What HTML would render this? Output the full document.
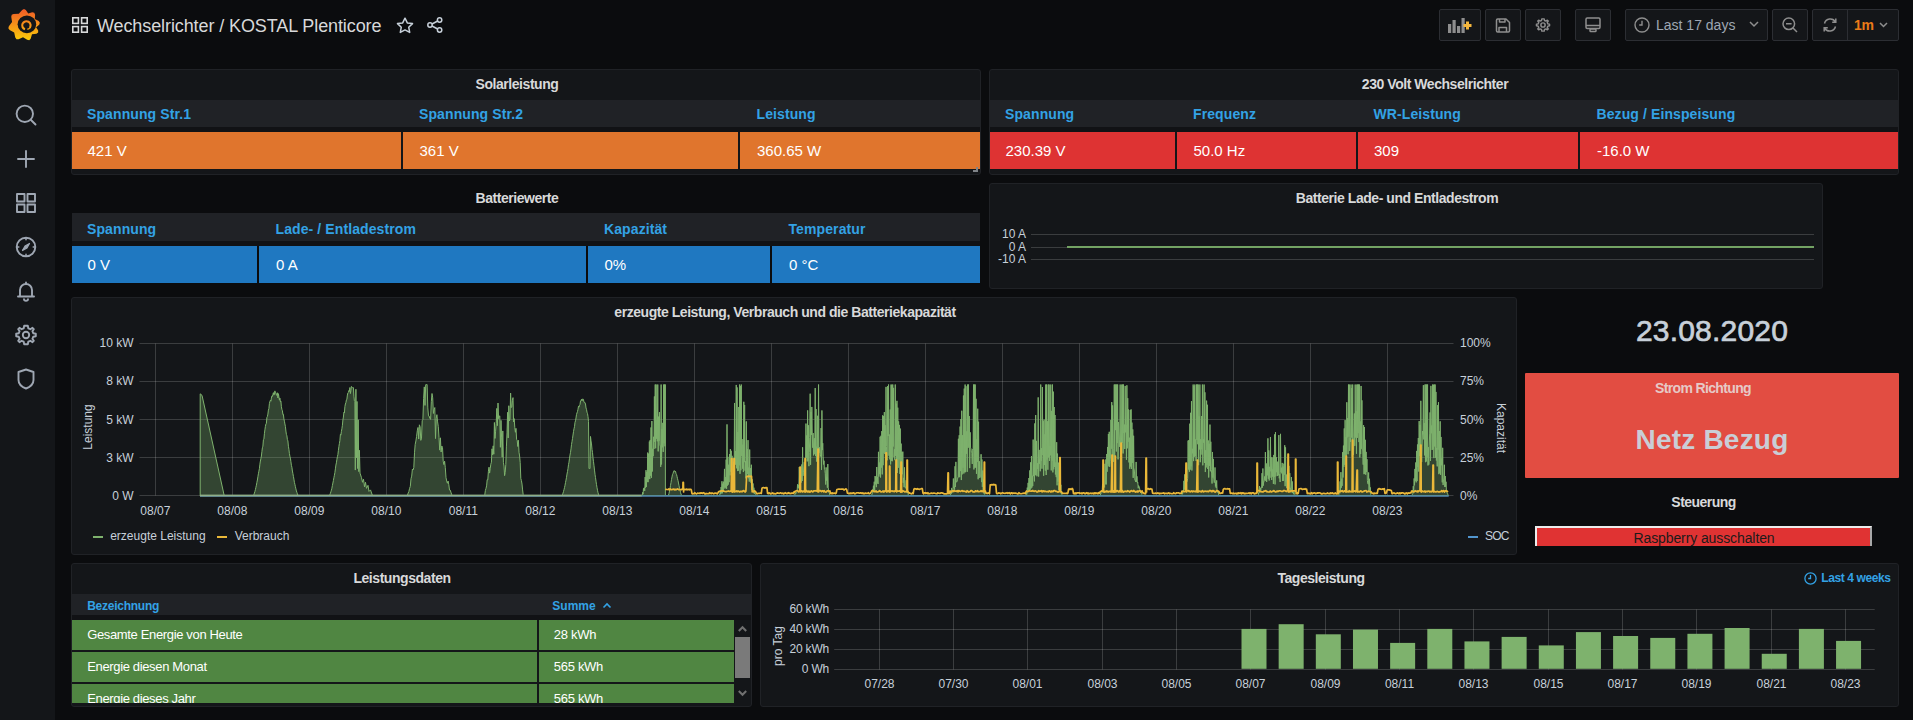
<!DOCTYPE html>
<html><head><meta charset="utf-8"><title>Grafana</title>
<style>
html,body{margin:0;padding:0;width:1913px;height:720px;overflow:hidden;background:#0b0c0e;}
body{position:relative;font-family:"Liberation Sans", sans-serif;}
.t{position:absolute;white-space:nowrap;}
.r{position:absolute;}
</style></head><body>
<div class="r" style="left:0.00px;top:0.00px;width:55.00px;height:720.00px;background:#141619;"></div>
<svg style="position:absolute;left:0px;top:0px" width="48" height="48" viewBox="0 0 48 48">
<defs><linearGradient id="lg" x1="0" y1="9" x2="0" y2="40" gradientUnits="userSpaceOnUse"><stop offset="0" stop-color="#f05a28"/><stop offset="1" stop-color="#fbca0a"/></linearGradient></defs>
<path fill="url(#lg)" d="M22.15 9.91 L24.00 9.00 L25.85 9.91 L28.21 13.44 L32.28 12.25 L34.28 12.74 L35.12 14.63 L34.76 19.04 L38.68 21.07 L39.84 22.77 L39.20 24.73 L36.11 27.14 L38.19 30.45 L38.13 32.51 L36.45 33.72 L31.99 34.35 L30.66 38.66 L29.21 40.13 L27.16 39.87 L23.03 37.26 L18.55 39.19 L16.49 39.13 L15.28 37.45 L14.18 32.40 L9.63 29.95 L8.35 28.33 L8.86 26.32 L12.07 22.02 L11.25 16.72 L11.74 14.72 L13.63 13.88 L18.80 13.85Z"/>
<ellipse cx="26.9" cy="24.3" rx="9.3" ry="8.9" fill="#141619"/>
<path fill="none" stroke="url(#lg)" stroke-width="2.1" d="M24.96 29.35 A4.2 4.2 0 1 1 29.84 27.81"/>
<path fill="none" stroke="url(#lg)" stroke-width="1.3" stroke-linecap="round" d="M29.84 27.81 A4.2 4.2 0 0 1 27.77 29.16"/>
</svg>
<svg style="position:absolute;left:14px;top:103px" width="24" height="24" viewBox="0 0 24 24" fill="none" stroke="#9fa7b3" stroke-width="1.9" stroke-linecap="round" stroke-linejoin="round"><circle cx="10.8" cy="10.8" r="8.2"/><path d="M17 17 L21.5 21.5"/></svg>
<svg style="position:absolute;left:14px;top:147px" width="24" height="24" viewBox="0 0 24 24" fill="none" stroke="#9fa7b3" stroke-width="1.9" stroke-linecap="round" stroke-linejoin="round"><path d="M12 4 V20 M4 12 H20"/></svg>
<svg style="position:absolute;left:14px;top:191px" width="24" height="24" viewBox="0 0 24 24" fill="none" stroke="#9fa7b3" stroke-width="1.9" stroke-linecap="round" stroke-linejoin="round"><rect x="3" y="3" width="7.5" height="7.5"/><rect x="13.5" y="3" width="7.5" height="7.5"/><rect x="3" y="13.5" width="7.5" height="7.5"/><rect x="13.5" y="13.5" width="7.5" height="7.5"/></svg>
<svg style="position:absolute;left:14px;top:235px" width="24" height="24" viewBox="0 0 24 24" fill="none" stroke="#9fa7b3" stroke-width="1.9" stroke-linecap="round" stroke-linejoin="round"><circle cx="12" cy="12" r="9.3"/><path d="M15.5 8.5 L13 13 L8.5 15.5 L11 11 Z" fill="#9fa7b3" stroke-width="1.2"/><path d="M12 3 V4.8 M12 19.2 V21 M3 12 H4.8 M19.2 12 H21" stroke-width="1.5"/></svg>
<svg style="position:absolute;left:14px;top:279px" width="24" height="24" viewBox="0 0 24 24" fill="none" stroke="#9fa7b3" stroke-width="1.9" stroke-linecap="round" stroke-linejoin="round"><path d="M6 17 V11 A6 6 0 0 1 18 11 V17"/><path d="M4 17.5 H20"/><path d="M10 20.3 A2 1.5 0 0 0 14 20.3"/><path d="M12 3.5 V5"/></svg>
<svg style="position:absolute;left:14px;top:323px" width="24" height="24" viewBox="0 0 24 24" fill="none" stroke="#9fa7b3" stroke-width="1.9" stroke-linecap="round" stroke-linejoin="round"><path d="M12 2.8 L13.8 2.8 L14.3 5.3 L16.4 6.2 L18.5 4.8 L19.8 6.1 L18.4 8.2 L19.3 10.3 L21.8 10.8 L21.8 13.2 L19.3 13.7 L18.4 15.8 L19.8 17.9 L18.5 19.2 L16.4 17.8 L14.3 18.7 L13.8 21.2 L10.2 21.2 L9.7 18.7 L7.6 17.8 L5.5 19.2 L4.2 17.9 L5.6 15.8 L4.7 13.7 L2.2 13.2 L2.2 10.8 L4.7 10.3 L5.6 8.2 L4.2 6.1 L5.5 4.8 L7.6 6.2 L9.7 5.3 L10.2 2.8 Z"/><circle cx="12" cy="12" r="3.2"/></svg>
<svg style="position:absolute;left:14px;top:367px" width="24" height="24" viewBox="0 0 24 24" fill="none" stroke="#9fa7b3" stroke-width="1.9" stroke-linecap="round" stroke-linejoin="round"><path d="M12 2.5 L19.5 5 V13 C19.5 17 16 20 12 21.5 C8 20 4.5 17 4.5 13 V5 Z"/></svg>
<svg style="position:absolute;left:72px;top:17px" width="16" height="16" viewBox="0 0 16 16" fill="none" stroke="#d8d9da" stroke-width="1.6"><rect x="0.8" y="0.8" width="5.6" height="5.6"/><rect x="9.6" y="0.8" width="5.6" height="5.6"/><rect x="0.8" y="9.6" width="5.6" height="5.6"/><rect x="9.6" y="9.6" width="5.6" height="5.6"/></svg>
<div class="t" style="left:97.00px;top:16.76px;width:1200px;font-size:18px;line-height:18px;color:#d8d9da;font-weight:400;text-align:left;letter-spacing:-0.1px;">Wechselrichter / KOSTAL Plenticore</div>
<svg style="position:absolute;left:396px;top:17px" width="18" height="17" viewBox="0 0 18 17" fill="none" stroke="#c7d0d9" stroke-width="1.5" stroke-linejoin="round"><path d="M9 1.2 L11.3 5.9 L16.5 6.6 L12.7 10.2 L13.7 15.4 L9 12.9 L4.3 15.4 L5.3 10.2 L1.5 6.6 L6.7 5.9 Z"/></svg>
<svg style="position:absolute;left:427px;top:17px" width="16" height="16" viewBox="0 0 16 16" fill="none" stroke="#c7d0d9" stroke-width="1.5"><circle cx="12.6" cy="3" r="2.2"/><circle cx="3" cy="8" r="2.2"/><circle cx="12.6" cy="13" r="2.2"/><path d="M5 7 L10.7 4 M5 9 L10.7 12"/></svg>
<div class="r" style="left:1439px;top:9px;width:42px;height:32px;background:#141619;border:1px solid #2c2e33;box-sizing:border-box;border-radius:2px;"></div>
<svg style="position:absolute;left:1448px;top:17px" width="24" height="16" viewBox="0 0 24 16"><rect x="0" y="7" width="3.2" height="9" fill="#8e8e8e"/><rect x="4.5" y="3" width="3.2" height="13" fill="#8e8e8e"/><rect x="9" y="9" width="3.2" height="7" fill="#8e8e8e"/><rect x="13.5" y="1" width="3.2" height="15" fill="#8e8e8e"/><path d="M19.5 4.5 V12.5 M15.5 8.5 H23.5" stroke="#f5b73d" stroke-width="3"/></svg>
<div class="r" style="left:1485px;top:9px;width:36px;height:32px;background:#141619;border:1px solid #2c2e33;box-sizing:border-box;border-radius:2px;"></div>
<svg style="position:absolute;left:1495px;top:18px" width="16" height="15" viewBox="0 0 16 15" fill="none" stroke="#8e8e8e" stroke-width="1.5" stroke-linejoin="round"><path d="M1.5 2.2 Q1.5 1 2.7 1 H11 L14.5 4.5 V12.8 Q14.5 14 13.3 14 H2.7 Q1.5 14 1.5 12.8 Z"/><path d="M4.5 1 V4 H10 V1"/><path d="M4 14 V9.5 H11.5 V14"/></svg>
<div class="r" style="left:1525px;top:9px;width:36px;height:32px;background:#141619;border:1px solid #2c2e33;box-sizing:border-box;border-radius:2px;"></div>
<svg style="position:absolute;left:1535px;top:17px" width="16" height="16" viewBox="0 0 24 24" fill="none" stroke="#8e8e8e" stroke-width="2.2" stroke-linejoin="round"><path d="M12 2.8 L13.8 2.8 L14.3 5.3 L16.4 6.2 L18.5 4.8 L19.8 6.1 L18.4 8.2 L19.3 10.3 L21.8 10.8 L21.8 13.2 L19.3 13.7 L18.4 15.8 L19.8 17.9 L18.5 19.2 L16.4 17.8 L14.3 18.7 L13.8 21.2 L10.2 21.2 L9.7 18.7 L7.6 17.8 L5.5 19.2 L4.2 17.9 L5.6 15.8 L4.7 13.7 L2.2 13.2 L2.2 10.8 L4.7 10.3 L5.6 8.2 L4.2 6.1 L5.5 4.8 L7.6 6.2 L9.7 5.3 L10.2 2.8 Z"/><circle cx="12" cy="12" r="3.2"/></svg>
<div class="r" style="left:1575px;top:9px;width:36px;height:32px;background:#141619;border:1px solid #2c2e33;box-sizing:border-box;border-radius:2px;"></div>
<svg style="position:absolute;left:1585px;top:17px" width="16" height="16" viewBox="0 0 16 16" fill="none" stroke="#8e8e8e" stroke-width="1.5"><rect x="1" y="1" width="14" height="10.5" rx="1.2"/><path d="M1 8.5 H15"/><rect x="5" y="12" width="6" height="2.5" rx="0.8"/></svg>
<div class="r" style="left:1625px;top:9px;width:143px;height:32px;background:#141619;border:1px solid #2c2e33;box-sizing:border-box;border-radius:2px;"></div>
<svg style="position:absolute;left:1634px;top:17px" width="16" height="16" viewBox="0 0 16 16" fill="none" stroke="#8e8e8e" stroke-width="1.4"><circle cx="8" cy="8" r="7"/><path d="M8 3.8 V8 H5.2"/></svg><svg style="position:absolute;left:1749px;top:21px" width="10" height="7" viewBox="0 0 10 7" fill="none" stroke="#8e8e8e" stroke-width="1.5"><path d="M1 1 L5 5 L9 1"/></svg>
<div class="t" style="left:1656.00px;top:17.65px;width:1200px;font-size:14px;line-height:14px;color:#9fa7b3;font-weight:400;text-align:left;letter-spacing:0px;">Last 17 days</div>
<div class="r" style="left:1772px;top:9px;width:36px;height:32px;background:#141619;border:1px solid #2c2e33;box-sizing:border-box;border-radius:2px;"></div>
<svg style="position:absolute;left:1782px;top:17px" width="16" height="16" viewBox="0 0 16 16" fill="none" stroke="#8e8e8e" stroke-width="1.5"><circle cx="6.8" cy="6.8" r="5.8"/><path d="M11 11 L15 15 M4 6.8 H9.6"/></svg>
<div class="r" style="left:1812px;top:9px;width:87px;height:32px;background:#141619;border:1px solid #2c2e33;box-sizing:border-box;border-radius:2px;"></div>
<div class="r" style="left:1847px;top:10px;width:1px;height:30px;background:#2c2e33"></div><svg style="position:absolute;left:1822px;top:17px" width="16" height="16" viewBox="0 0 16 16" fill="none" stroke="#8e8e8e" stroke-width="1.5"><path d="M2.5 6.5 A6 6 0 0 1 13.5 5 M13.8 1.5 V5.2 H10.2"/><path d="M13.5 9.5 A6 6 0 0 1 2.5 11 M2.2 14.5 V10.8 H5.8"/></svg><svg style="position:absolute;left:1879px;top:22px" width="9" height="6" viewBox="0 0 9 6" fill="none" stroke="#8e8e8e" stroke-width="1.5"><path d="M1 1 L4.5 4.5 L8 1"/></svg>
<div class="t" style="left:1854.00px;top:18.15px;width:1200px;font-size:14px;line-height:14px;color:#eb7b18;font-weight:700;text-align:left;letter-spacing:-0.3px;">1m</div>
<div class="r" style="left:71.00px;top:69.00px;width:910.00px;height:106.00px;background:#141619;border:1px solid #202226;box-sizing:border-box;border-radius:3px;"></div>
<div class="t" style="left:-83.00px;top:76.85px;width:1200px;font-size:14px;line-height:14px;color:#d8d9da;font-weight:700;text-align:center;letter-spacing:-0.45px;">Solarleistung</div>
<div class="r" style="left:72.00px;top:100.00px;width:908.00px;height:27.00px;background:#202226;"></div>
<div class="r" style="left:72.00px;top:127.00px;width:908.00px;height:5.00px;background:#111215;"></div>
<div class="r" style="left:72.00px;top:132.00px;width:329.00px;height:37.00px;background:#e0752d;"></div>
<div class="t" style="left:87.00px;top:107.45px;width:1200px;font-size:14px;line-height:14px;color:#33a2e5;font-weight:700;text-align:left;letter-spacing:0.1px;">Spannung Str.1</div>
<div class="t" style="left:87.50px;top:143.10px;width:1200px;font-size:15px;line-height:15px;color:#ffffff;font-weight:400;text-align:left;letter-spacing:0px;">421 V</div>
<div class="r" style="left:403.00px;top:132.00px;width:335.00px;height:37.00px;background:#e0752d;"></div>
<div class="t" style="left:419.00px;top:107.45px;width:1200px;font-size:14px;line-height:14px;color:#33a2e5;font-weight:700;text-align:left;letter-spacing:0.1px;">Spannung Str.2</div>
<div class="t" style="left:419.50px;top:143.10px;width:1200px;font-size:15px;line-height:15px;color:#ffffff;font-weight:400;text-align:left;letter-spacing:0px;">361 V</div>
<div class="r" style="left:740.00px;top:132.00px;width:240.00px;height:37.00px;background:#e0752d;"></div>
<div class="t" style="left:756.50px;top:107.45px;width:1200px;font-size:14px;line-height:14px;color:#33a2e5;font-weight:700;text-align:left;letter-spacing:0.1px;">Leistung</div>
<div class="t" style="left:757.00px;top:143.10px;width:1200px;font-size:15px;line-height:15px;color:#ffffff;font-weight:400;text-align:left;letter-spacing:0px;">360.65 W</div>
<div class="r" style="left:989.00px;top:69.00px;width:910.00px;height:106.00px;background:#141619;border:1px solid #202226;box-sizing:border-box;border-radius:3px;"></div>
<div class="t" style="left:835.00px;top:76.85px;width:1200px;font-size:14px;line-height:14px;color:#d8d9da;font-weight:700;text-align:center;letter-spacing:-0.45px;">230 Volt Wechselrichter</div>
<div class="r" style="left:990.00px;top:100.00px;width:908.00px;height:27.00px;background:#202226;"></div>
<div class="r" style="left:990.00px;top:127.00px;width:908.00px;height:5.00px;background:#111215;"></div>
<div class="r" style="left:990.00px;top:132.00px;width:185.00px;height:37.00px;background:#de3333;"></div>
<div class="t" style="left:1005.00px;top:107.45px;width:1200px;font-size:14px;line-height:14px;color:#33a2e5;font-weight:700;text-align:left;letter-spacing:0.1px;">Spannung</div>
<div class="t" style="left:1005.50px;top:143.10px;width:1200px;font-size:15px;line-height:15px;color:#ffffff;font-weight:400;text-align:left;letter-spacing:0px;">230.39 V</div>
<div class="r" style="left:1177.00px;top:132.00px;width:179.00px;height:37.00px;background:#de3333;"></div>
<div class="t" style="left:1193.00px;top:107.45px;width:1200px;font-size:14px;line-height:14px;color:#33a2e5;font-weight:700;text-align:left;letter-spacing:0.1px;">Frequenz</div>
<div class="t" style="left:1193.50px;top:143.10px;width:1200px;font-size:15px;line-height:15px;color:#ffffff;font-weight:400;text-align:left;letter-spacing:0px;">50.0 Hz</div>
<div class="r" style="left:1358.00px;top:132.00px;width:220.00px;height:37.00px;background:#de3333;"></div>
<div class="t" style="left:1373.50px;top:107.45px;width:1200px;font-size:14px;line-height:14px;color:#33a2e5;font-weight:700;text-align:left;letter-spacing:0.1px;">WR-Leistung</div>
<div class="t" style="left:1374.00px;top:143.10px;width:1200px;font-size:15px;line-height:15px;color:#ffffff;font-weight:400;text-align:left;letter-spacing:0px;">309</div>
<div class="r" style="left:1580.00px;top:132.00px;width:318.00px;height:37.00px;background:#de3333;"></div>
<div class="t" style="left:1596.50px;top:107.45px;width:1200px;font-size:14px;line-height:14px;color:#33a2e5;font-weight:700;text-align:left;letter-spacing:0.1px;">Bezug / Einspeisung</div>
<div class="t" style="left:1597.00px;top:143.10px;width:1200px;font-size:15px;line-height:15px;color:#ffffff;font-weight:400;text-align:left;letter-spacing:0px;">-16.0 W</div>
<div class="t" style="left:-83.00px;top:190.85px;width:1200px;font-size:14px;line-height:14px;color:#d8d9da;font-weight:700;text-align:center;letter-spacing:-0.45px;">Batteriewerte</div>
<div class="r" style="left:72.00px;top:213.00px;width:908.00px;height:28.00px;background:#202226;"></div>
<div class="r" style="left:72.00px;top:241.00px;width:908.00px;height:5.00px;background:#111215;"></div>
<div class="r" style="left:72.00px;top:246.00px;width:185.00px;height:37.00px;background:#1f78c1;"></div>
<div class="t" style="left:87.00px;top:221.65px;width:1200px;font-size:14px;line-height:14px;color:#33a2e5;font-weight:700;text-align:left;letter-spacing:0.1px;">Spannung</div>
<div class="t" style="left:87.50px;top:257.10px;width:1200px;font-size:15px;line-height:15px;color:#ffffff;font-weight:400;text-align:left;letter-spacing:0px;">0 V</div>
<div class="r" style="left:259.00px;top:246.00px;width:327.00px;height:37.00px;background:#1f78c1;"></div>
<div class="t" style="left:275.50px;top:221.65px;width:1200px;font-size:14px;line-height:14px;color:#33a2e5;font-weight:700;text-align:left;letter-spacing:0.1px;">Lade- / Entladestrom</div>
<div class="t" style="left:276.00px;top:257.10px;width:1200px;font-size:15px;line-height:15px;color:#ffffff;font-weight:400;text-align:left;letter-spacing:0px;">0 A</div>
<div class="r" style="left:588.00px;top:246.00px;width:182.00px;height:37.00px;background:#1f78c1;"></div>
<div class="t" style="left:604.00px;top:221.65px;width:1200px;font-size:14px;line-height:14px;color:#33a2e5;font-weight:700;text-align:left;letter-spacing:0.1px;">Kapazität</div>
<div class="t" style="left:604.50px;top:257.10px;width:1200px;font-size:15px;line-height:15px;color:#ffffff;font-weight:400;text-align:left;letter-spacing:0px;">0%</div>
<div class="r" style="left:772.00px;top:246.00px;width:208.00px;height:37.00px;background:#1f78c1;"></div>
<div class="t" style="left:788.50px;top:221.65px;width:1200px;font-size:14px;line-height:14px;color:#33a2e5;font-weight:700;text-align:left;letter-spacing:0.1px;">Temperatur</div>
<div class="t" style="left:789.00px;top:257.10px;width:1200px;font-size:15px;line-height:15px;color:#ffffff;font-weight:400;text-align:left;letter-spacing:0px;">0 °C</div>
<div class="r" style="left:976.00px;top:166.50px;width:2.00px;height:5.50px;background:#7f8388;"></div>
<div class="r" style="left:973.00px;top:170.00px;width:5.00px;height:2.00px;background:#7f8388;"></div>
<div class="r" style="left:989.00px;top:183.00px;width:834.00px;height:106.00px;background:#141619;border:1px solid #202226;box-sizing:border-box;border-radius:3px;"></div>
<div class="t" style="left:797.00px;top:190.65px;width:1200px;font-size:14px;line-height:14px;color:#d8d9da;font-weight:700;text-align:center;letter-spacing:-0.45px;">Batterie Lade- und Entladestrom</div>
<div class="r" style="left:1031.00px;top:234.00px;width:783.00px;height:1.00px;background:rgba(255,255,255,0.17);"></div>
<div class="t" style="left:-174.00px;top:228.34px;width:1200px;font-size:12px;line-height:12px;color:#c7d0d9;font-weight:400;text-align:right;letter-spacing:0px;">10 A</div>
<div class="r" style="left:1031.00px;top:247.00px;width:783.00px;height:1.00px;background:rgba(255,255,255,0.17);"></div>
<div class="t" style="left:-174.00px;top:240.84px;width:1200px;font-size:12px;line-height:12px;color:#c7d0d9;font-weight:400;text-align:right;letter-spacing:0px;">0 A</div>
<div class="r" style="left:1031.00px;top:259.00px;width:783.00px;height:1.00px;background:rgba(255,255,255,0.17);"></div>
<div class="t" style="left:-174.00px;top:253.34px;width:1200px;font-size:12px;line-height:12px;color:#c7d0d9;font-weight:400;text-align:right;letter-spacing:0px;">-10 A</div>
<div class="r" style="left:1067.00px;top:246.00px;width:747.00px;height:2.00px;background:#73a263;"></div>
<div class="r" style="left:71.00px;top:297.00px;width:1446.00px;height:258.00px;background:#141619;border:1px solid #202226;box-sizing:border-box;border-radius:3px;"></div>
<div class="t" style="left:185.00px;top:305.15px;width:1200px;font-size:14px;line-height:14px;color:#d8d9da;font-weight:700;text-align:center;letter-spacing:-0.45px;">erzeugte Leistung, Verbrauch und die Batteriekapazität</div>
<svg style="position:absolute;left:0;top:0" width="1913" height="720" viewBox="0 0 1913 720"><line x1="139.5" y1="495.5" x2="1453.5" y2="495.5" stroke="rgba(255,255,255,0.17)" stroke-width="1"/><line x1="139.5" y1="457.5" x2="1453.5" y2="457.5" stroke="rgba(255,255,255,0.17)" stroke-width="1"/><line x1="139.5" y1="419.5" x2="1453.5" y2="419.5" stroke="rgba(255,255,255,0.17)" stroke-width="1"/><line x1="139.5" y1="381.5" x2="1453.5" y2="381.5" stroke="rgba(255,255,255,0.17)" stroke-width="1"/><line x1="139.5" y1="343.5" x2="1453.5" y2="343.5" stroke="rgba(255,255,255,0.17)" stroke-width="1"/><line x1="155.5" y1="343.5" x2="155.5" y2="495.5" stroke="rgba(255,255,255,0.17)" stroke-width="1"/><line x1="232.5" y1="343.5" x2="232.5" y2="495.5" stroke="rgba(255,255,255,0.17)" stroke-width="1"/><line x1="309.5" y1="343.5" x2="309.5" y2="495.5" stroke="rgba(255,255,255,0.17)" stroke-width="1"/><line x1="386.5" y1="343.5" x2="386.5" y2="495.5" stroke="rgba(255,255,255,0.17)" stroke-width="1"/><line x1="463.5" y1="343.5" x2="463.5" y2="495.5" stroke="rgba(255,255,255,0.17)" stroke-width="1"/><line x1="540.5" y1="343.5" x2="540.5" y2="495.5" stroke="rgba(255,255,255,0.17)" stroke-width="1"/><line x1="617.5" y1="343.5" x2="617.5" y2="495.5" stroke="rgba(255,255,255,0.17)" stroke-width="1"/><line x1="694.5" y1="343.5" x2="694.5" y2="495.5" stroke="rgba(255,255,255,0.17)" stroke-width="1"/><line x1="771.5" y1="343.5" x2="771.5" y2="495.5" stroke="rgba(255,255,255,0.17)" stroke-width="1"/><line x1="848.5" y1="343.5" x2="848.5" y2="495.5" stroke="rgba(255,255,255,0.17)" stroke-width="1"/><line x1="925.5" y1="343.5" x2="925.5" y2="495.5" stroke="rgba(255,255,255,0.17)" stroke-width="1"/><line x1="1002.5" y1="343.5" x2="1002.5" y2="495.5" stroke="rgba(255,255,255,0.17)" stroke-width="1"/><line x1="1079.5" y1="343.5" x2="1079.5" y2="495.5" stroke="rgba(255,255,255,0.17)" stroke-width="1"/><line x1="1156.5" y1="343.5" x2="1156.5" y2="495.5" stroke="rgba(255,255,255,0.17)" stroke-width="1"/><line x1="1233.5" y1="343.5" x2="1233.5" y2="495.5" stroke="rgba(255,255,255,0.17)" stroke-width="1"/><line x1="1310.5" y1="343.5" x2="1310.5" y2="495.5" stroke="rgba(255,255,255,0.17)" stroke-width="1"/><line x1="1387.5" y1="343.5" x2="1387.5" y2="495.5" stroke="rgba(255,255,255,0.17)" stroke-width="1"/><path d="M200.20 496.00 L200.20 496.00 L200.20 393.82 L202.00 395.35 L224.30 496.00 L224.30 496.00Z M252.90 496.00 L252.90 496.00 L253.40 495.50 L253.90 494.54 L254.40 493.11 L254.90 491.56 L255.40 489.61 L255.90 487.32 L256.40 485.24 L256.90 482.36 L257.40 480.01 L257.90 476.77 L258.40 473.78 L258.90 471.17 L259.40 468.70 L259.90 464.19 L260.40 461.03 L260.90 458.57 L261.40 456.03 L261.90 451.69 L262.40 447.75 L262.90 446.15 L263.40 439.70 L263.90 439.15 L264.40 433.73 L264.90 429.83 L265.40 426.44 L265.90 424.07 L266.40 423.32 L266.90 417.41 L267.40 416.50 L267.90 414.10 L268.40 410.13 L268.90 408.62 L269.40 403.64 L269.90 401.43 L270.40 400.26 L270.90 401.23 L271.40 398.10 L271.90 395.96 L272.40 396.38 L272.90 394.49 L273.40 392.65 L273.90 395.12 L274.40 394.05 L274.90 390.88 L275.40 392.93 L275.90 392.75 L276.40 395.30 L276.90 394.86 L277.40 392.75 L277.90 397.96 L278.40 393.64 L278.90 396.72 L279.40 400.17 L279.90 398.11 L280.40 401.83 L280.90 401.15 L281.40 406.74 L281.90 409.42 L282.40 410.68 L282.90 414.66 L283.40 414.36 L283.90 418.91 L284.40 421.19 L284.90 423.98 L285.40 426.40 L285.90 431.02 L286.40 434.47 L286.90 435.79 L287.40 439.67 L287.90 440.88 L288.40 446.23 L288.90 449.30 L289.40 453.48 L289.90 456.21 L290.40 458.14 L290.90 461.60 L291.40 465.32 L291.90 467.26 L292.40 471.04 L292.90 473.57 L293.40 476.39 L293.90 479.10 L294.40 482.36 L294.90 484.30 L295.40 486.69 L295.90 488.88 L296.40 490.94 L296.90 492.40 L297.40 493.91 L297.90 495.04 L298.40 495.80 L298.40 496.00Z M328.90 496.00 L328.90 496.00 L329.40 495.55 L329.90 494.57 L330.40 493.30 L330.90 491.72 L331.40 490.15 L331.90 488.24 L332.40 485.46 L332.90 483.03 L333.40 480.48 L333.90 477.74 L334.40 475.27 L334.90 472.53 L335.40 468.84 L335.90 465.07 L336.40 462.82 L336.90 459.41 L337.40 456.69 L337.90 454.67 L338.40 450.50 L338.90 446.51 L339.40 443.58 L339.90 440.52 L340.40 434.36 L340.90 435.11 L341.40 431.36 L341.90 428.77 L342.40 425.32 L342.90 419.98 L343.40 417.06 L343.90 412.33 L344.40 412.99 L344.90 406.55 L345.40 404.01 L345.90 402.58 L346.40 399.98 L346.90 399.18 L347.40 395.06 L347.90 392.84 L348.40 392.38 L348.90 390.53 L349.40 391.36 L349.90 387.53 L350.40 393.59 L350.90 390.76 L351.40 386.39 L351.90 386.92 L352.40 387.58 L352.90 388.09 L353.40 387.64 L353.90 396.18 L354.40 400.92 L354.90 401.61 L355.30 470.07 L355.90 389.25 L356.40 457.88 L357.00 401.45 L357.60 468.55 L358.20 419.75 L358.80 471.60 L359.40 450.25 L360.00 473.12 L361.50 477.70 L362.50 482.27 L363.50 479.23 L364.50 486.85 L365.50 482.27 L366.50 488.38 L368.00 485.32 L369.00 491.43 L370.50 489.90 L372.60 496.00 L372.60 496.00Z M406.80 496.00 L406.80 496.00 L407.50 494.95 L408.20 493.03 L408.90 491.43 L409.60 488.33 L410.30 486.44 L411.00 478.70 L411.70 476.13 L412.40 469.13 L413.10 469.90 L413.80 467.57 L414.50 452.80 L415.20 444.34 L415.90 440.95 L416.60 436.38 L417.30 430.73 L418.00 427.48 L418.70 439.05 L419.40 424.80 L420.10 426.71 L420.80 440.36 L421.50 438.06 L422.20 420.79 L422.90 419.43 L423.60 398.68 L424.30 386.89 L425.00 405.41 L425.70 384.70 L426.40 384.52 L427.10 384.52 L427.80 407.90 L428.50 415.84 L429.20 416.12 L429.90 418.67 L430.60 419.31 L431.30 401.65 L432.00 393.50 L432.70 397.88 L433.40 413.47 L434.10 409.54 L434.80 407.55 L435.50 438.55 L436.20 418.36 L436.90 414.67 L437.60 421.92 L438.30 426.59 L439.00 437.62 L439.70 450.15 L440.40 437.80 L441.10 452.04 L441.80 446.03 L442.50 447.56 L443.20 461.19 L443.90 464.62 L444.60 461.17 L445.30 467.72 L446.00 477.69 L446.70 480.98 L447.40 483.24 L448.10 481.04 L448.80 484.69 L449.50 490.00 L450.20 490.11 L450.90 492.15 L451.60 494.27 L452.30 495.57 L452.30 496.00Z M483.60 496.00 L483.60 496.00 L484.20 495.43 L484.80 494.58 L485.40 490.40 L486.00 488.36 L486.60 485.86 L487.20 479.64 L487.80 479.92 L488.40 471.31 L489.00 467.18 L489.60 473.10 L490.20 468.79 L490.80 464.24 L491.40 462.21 L492.00 448.81 L492.60 454.82 L493.20 445.83 L493.80 454.22 L494.40 422.48 L495.00 438.45 L495.60 431.21 L496.20 423.34 L496.80 408.40 L497.40 425.69 L498.00 403.02 L498.60 418.71 L499.20 416.21 L499.80 415.87 L500.40 447.30 L501.00 420.37 L501.60 437.96 L502.20 457.21 L502.80 430.92 L503.40 462.35 L504.00 466.04 L504.60 475.66 L505.20 472.39 L505.80 464.45 L506.40 446.89 L507.00 432.88 L507.60 412.30 L508.20 437.96 L508.80 405.74 L509.40 420.95 L510.00 419.05 L510.60 393.05 L511.20 407.64 L511.80 406.89 L512.40 400.38 L513.00 397.62 L513.60 421.96 L514.20 418.62 L514.80 427.66 L515.40 432.28 L516.00 428.35 L516.60 439.43 L517.20 440.29 L517.80 446.51 L518.40 440.26 L519.00 452.28 L519.60 455.94 L520.20 462.56 L520.80 478.46 L521.40 480.51 L522.00 484.04 L522.60 489.92 L523.20 494.73 L523.20 496.00Z M561.50 496.00 L561.50 496.00 L562.00 495.51 L562.50 494.50 L563.00 493.15 L563.50 491.47 L564.00 489.66 L564.50 487.58 L565.00 485.32 L565.50 482.54 L566.00 480.12 L566.50 477.31 L567.00 474.05 L567.50 471.54 L568.00 468.53 L568.50 464.67 L569.00 462.15 L569.50 458.26 L570.00 455.04 L570.50 452.37 L571.00 448.86 L571.50 444.53 L572.00 441.65 L572.50 438.54 L573.00 435.03 L573.50 431.62 L574.00 428.80 L574.50 426.70 L575.00 422.33 L575.50 420.80 L576.00 417.95 L576.50 414.46 L577.00 412.92 L577.50 411.52 L578.00 409.25 L578.50 406.24 L579.00 407.13 L579.50 405.16 L580.00 404.45 L580.50 400.93 L581.00 400.54 L581.50 399.23 L582.00 400.95 L582.50 399.23 L583.00 398.81 L583.50 399.98 L584.00 402.06 L584.50 402.78 L585.00 402.52 L585.50 403.89 L586.00 407.99 L586.50 409.32 L587.00 412.22 L587.50 413.53 L588.00 416.60 L588.50 421.42 L589.00 468.55 L589.50 468.55 L590.00 468.55 L590.50 436.46 L591.00 440.88 L591.50 443.95 L592.00 449.40 L592.50 452.63 L593.00 457.92 L593.50 461.71 L594.00 465.81 L594.50 470.08 L595.00 474.27 L595.50 477.63 L596.00 481.15 L596.50 484.64 L597.00 487.58 L597.50 490.26 L598.00 492.58 L598.50 494.42 L599.00 495.67 L599.00 496.00Z M668.00 496.00 L668.00 496.00 L668.50 495.12 L669.00 493.43 L669.50 491.03 L670.00 488.45 L670.50 485.40 L671.00 482.57 L671.50 479.40 L672.00 476.99 L672.50 474.38 L673.00 473.49 L673.50 471.90 L674.00 470.57 L674.50 470.82 L675.00 471.83 L675.50 471.29 L676.00 473.45 L676.50 474.39 L677.00 476.27 L677.50 478.71 L678.00 480.51 L678.50 483.01 L679.00 485.57 L679.50 488.11 L680.00 490.10 L680.50 492.31 L681.00 494.03 L681.50 495.34 L682.00 496.00 L682.00 496.00Z M641.80 496.00 L641.80 496.00 L642.22 495.60 L642.64 492.34 L643.06 494.23 L643.48 488.38 L643.90 490.90 L644.32 487.63 L644.74 490.79 L645.16 477.05 L645.58 487.75 L646.00 470.17 L646.42 486.98 L646.84 471.94 L647.26 482.07 L647.68 452.58 L648.10 482.15 L648.52 453.65 L648.94 478.81 L649.36 441.53 L649.78 479.13 L650.20 439.98 L650.62 475.74 L651.04 427.43 L651.46 477.80 L651.88 421.02 L652.30 471.51 L652.72 448.78 L653.14 456.22 L653.56 436.80 L653.98 449.03 L654.40 396.46 L654.82 441.84 L655.24 384.52 L655.66 448.29 L656.08 384.52 L656.50 438.67 L656.92 420.17 L657.34 441.29 L657.76 384.52 L658.18 451.38 L658.60 416.62 L659.02 440.82 L659.44 412.19 L659.86 445.53 L660.28 445.45 L660.70 466.89 L661.12 384.52 L661.54 464.47 L661.96 428.96 L662.38 447.33 L662.80 422.84 L663.22 451.87 L663.64 384.52 L664.06 443.38 L664.48 384.52 L664.90 446.30 L665.32 384.52 L665.40 496.00 L665.40 496.00Z M718.60 496.00 L718.60 496.00 L719.02 495.78 L719.44 494.71 L719.86 495.30 L720.28 490.20 L720.70 494.04 L721.12 487.04 L721.54 493.25 L721.96 481.25 L722.38 493.31 L722.80 483.62 L723.22 492.07 L723.64 481.67 L724.06 487.28 L724.48 468.89 L724.90 488.59 L725.32 477.17 L725.74 487.56 L726.16 459.61 L726.58 488.79 L727.00 424.39 L727.42 485.68 L727.84 456.79 L728.26 484.64 L728.68 464.71 L729.10 482.18 L729.52 454.00 L729.94 475.37 L730.36 449.12 L730.78 471.70 L731.20 450.75 L731.62 482.68 L732.04 455.75 L732.46 470.43 L732.88 458.40 L733.30 480.51 L733.72 461.65 L734.14 471.63 L734.56 402.98 L734.98 464.75 L735.40 451.06 L735.82 464.47 L736.24 384.94 L736.66 468.32 L737.08 387.40 L737.50 471.07 L737.92 432.05 L738.34 470.78 L738.76 406.99 L739.18 465.40 L739.60 384.52 L740.02 473.81 L740.44 385.98 L740.86 470.34 L741.28 384.52 L741.70 455.80 L742.12 439.14 L742.54 468.64 L742.96 444.60 L743.38 472.06 L743.80 401.77 L744.22 462.18 L744.64 404.94 L745.06 470.64 L745.48 461.23 L745.90 478.40 L746.32 421.42 L746.74 477.55 L747.16 449.13 L747.58 473.96 L748.00 440.14 L748.42 478.23 L748.84 467.46 L749.26 481.61 L749.68 449.56 L750.10 480.65 L750.52 468.21 L750.94 482.68 L751.36 464.73 L751.78 489.95 L752.20 479.27 L752.62 487.50 L753.04 483.45 L753.46 490.31 L753.88 487.69 L754.30 493.90 L754.72 492.13 L755.14 493.77 L755.56 494.27 L755.98 495.72 L755.98 496.00Z M794.20 496.00 L794.20 496.00 L794.62 495.46 L795.04 493.41 L795.46 494.10 L795.88 492.71 L796.30 493.18 L796.72 492.31 L797.14 491.39 L797.56 484.35 L797.98 487.83 L798.40 484.89 L798.82 488.36 L799.24 467.00 L799.66 482.54 L800.08 485.20 L800.50 482.03 L800.92 476.89 L801.34 482.57 L801.76 464.51 L802.18 480.99 L802.60 447.28 L803.02 475.95 L803.44 472.81 L803.86 466.91 L804.28 462.02 L804.70 475.27 L805.12 464.10 L805.54 459.97 L805.96 423.58 L806.38 458.00 L806.80 435.44 L807.22 461.45 L807.64 410.39 L808.06 460.82 L808.48 425.31 L808.90 466.18 L809.32 452.43 L809.74 437.67 L810.16 393.68 L810.58 464.79 L811.00 411.93 L811.42 434.87 L811.84 406.94 L812.26 433.19 L812.68 447.68 L813.10 433.04 L813.52 455.38 L813.94 442.57 L814.36 438.23 L814.78 454.25 L815.20 388.07 L815.62 456.08 L816.04 409.05 L816.46 461.56 L816.88 446.58 L817.30 453.38 L817.72 415.75 L818.14 450.72 L818.56 384.52 L818.98 452.81 L819.40 447.30 L819.82 453.11 L820.24 456.58 L820.66 454.84 L821.08 428.07 L821.50 469.85 L821.92 410.43 L822.34 450.07 L822.76 443.23 L823.18 456.30 L823.60 464.47 L824.02 460.72 L824.44 469.44 L824.86 470.29 L825.28 473.71 L825.70 484.55 L826.12 467.39 L826.54 480.55 L826.96 477.29 L827.38 487.79 L827.80 464.02 L828.22 487.26 L828.64 490.80 L829.06 493.02 L829.48 493.14 L829.90 495.82 L829.90 496.00Z M870.90 496.00 L870.90 496.00 L871.32 495.46 L871.74 494.39 L872.16 494.51 L872.58 489.60 L873.00 492.09 L873.42 485.72 L873.84 490.16 L874.26 481.69 L874.68 491.57 L875.10 476.02 L875.52 484.27 L875.94 476.77 L876.36 487.17 L876.78 467.00 L877.20 483.25 L877.62 476.88 L878.04 483.99 L878.46 451.82 L878.88 476.64 L879.30 462.48 L879.72 474.20 L880.14 436.80 L880.56 477.53 L880.98 435.72 L881.40 467.58 L881.82 431.08 L882.24 474.38 L882.66 415.34 L883.08 465.22 L883.50 415.96 L883.92 452.88 L884.34 412.12 L884.76 454.02 L885.18 425.17 L885.60 469.97 L886.02 386.88 L886.44 446.63 L886.86 458.35 L887.28 460.26 L887.70 386.10 L888.12 436.02 L888.54 384.52 L888.96 455.71 L889.38 434.45 L889.80 459.39 L890.22 409.54 L890.64 464.44 L891.06 384.52 L891.48 460.77 L891.90 384.79 L892.32 461.22 L892.74 384.52 L893.16 446.55 L893.58 387.86 L894.00 457.18 L894.42 449.28 L894.84 460.18 L895.26 384.52 L895.68 455.95 L896.10 403.65 L896.52 462.93 L896.94 400.84 L897.36 472.94 L897.78 407.67 L898.20 467.80 L898.62 421.39 L899.04 459.39 L899.46 424.90 L899.88 473.88 L900.30 428.57 L900.72 465.91 L901.14 443.62 L901.56 473.36 L901.98 452.10 L902.40 474.24 L902.82 451.62 L903.24 482.74 L903.66 477.86 L904.08 487.17 L904.50 467.37 L904.92 485.70 L905.34 488.03 L905.76 488.38 L906.18 480.24 L906.60 492.49 L907.02 486.08 L907.44 492.54 L907.86 491.56 L908.28 495.09 L908.70 496.00 L908.70 496.00Z M950.00 496.00 L950.00 496.00 L950.42 495.46 L950.84 493.12 L951.26 493.93 L951.68 487.90 L952.10 492.75 L952.52 491.10 L952.94 490.50 L953.36 478.49 L953.78 488.19 L954.20 486.50 L954.62 489.67 L955.04 466.26 L955.46 486.99 L955.88 461.87 L956.30 482.27 L956.72 481.43 L957.14 481.59 L957.56 479.18 L957.98 476.22 L958.40 438.78 L958.82 477.40 L959.24 435.21 L959.66 477.08 L960.08 426.56 L960.50 471.08 L960.92 419.06 L961.34 480.06 L961.76 410.73 L962.18 474.38 L962.60 435.19 L963.02 467.71 L963.44 395.56 L963.86 473.57 L964.28 388.57 L964.70 472.25 L965.12 384.52 L965.54 472.18 L965.96 386.19 L966.38 453.80 L966.80 431.32 L967.22 471.82 L967.64 384.52 L968.06 448.03 L968.48 384.52 L968.90 446.83 L969.32 416.10 L969.74 468.12 L970.16 432.31 L970.58 447.88 L971.00 448.70 L971.42 452.34 L971.84 453.70 L972.26 463.95 L972.68 449.02 L973.10 449.47 L973.52 384.52 L973.94 469.45 L974.36 384.52 L974.78 467.73 L975.20 384.52 L975.62 467.55 L976.04 398.78 L976.46 473.79 L976.88 439.13 L977.30 461.87 L977.72 408.71 L978.14 479.31 L978.56 421.72 L978.98 477.86 L979.40 461.25 L979.82 477.77 L980.24 476.66 L980.66 476.55 L981.08 454.25 L981.50 482.10 L981.92 459.52 L982.34 486.88 L982.76 470.53 L983.18 490.29 L983.60 479.67 L984.02 493.70 L984.44 492.73 L984.86 494.71 L985.28 495.60 L985.28 496.00Z M1025.60 496.00 L1025.60 496.00 L1026.02 495.75 L1026.44 492.72 L1026.86 494.31 L1027.28 487.60 L1027.70 492.20 L1028.12 482.84 L1028.54 491.02 L1028.96 478.03 L1029.38 490.53 L1029.80 470.40 L1030.22 489.72 L1030.64 462.33 L1031.06 488.41 L1031.48 456.08 L1031.90 487.52 L1032.32 475.71 L1032.74 485.94 L1033.16 439.58 L1033.58 476.14 L1034.00 465.03 L1034.42 481.40 L1034.84 423.40 L1035.26 475.29 L1035.68 415.04 L1036.10 474.93 L1036.52 440.92 L1036.94 476.29 L1037.36 463.14 L1037.78 468.93 L1038.20 397.39 L1038.62 476.60 L1039.04 458.67 L1039.46 463.74 L1039.88 449.85 L1040.30 471.26 L1040.72 384.52 L1041.14 460.91 L1041.56 448.22 L1041.98 468.69 L1042.40 386.99 L1042.82 455.11 L1043.24 421.09 L1043.66 475.79 L1044.08 419.60 L1044.50 465.04 L1044.92 434.28 L1045.34 470.64 L1045.76 384.52 L1046.18 475.03 L1046.60 384.52 L1047.02 459.66 L1047.44 421.28 L1047.86 469.71 L1048.28 384.52 L1048.70 457.48 L1049.12 384.52 L1049.54 460.90 L1049.96 446.10 L1050.38 455.33 L1050.80 384.52 L1051.22 470.41 L1051.64 410.89 L1052.06 460.72 L1052.48 384.52 L1052.90 472.38 L1053.32 391.61 L1053.74 469.41 L1054.16 407.01 L1054.58 466.91 L1055.00 415.00 L1055.42 474.46 L1055.84 462.49 L1056.26 477.18 L1056.68 442.21 L1057.10 485.33 L1057.52 453.61 L1057.94 481.65 L1058.36 462.61 L1058.78 489.92 L1059.20 482.95 L1059.62 491.44 L1060.04 478.72 L1060.46 491.51 L1060.88 484.79 L1061.30 493.83 L1061.72 492.57 L1062.14 495.93 L1062.14 496.00Z M1100.00 496.00 L1100.00 496.00 L1100.42 495.22 L1100.84 492.50 L1101.26 492.87 L1101.68 493.12 L1102.10 492.45 L1102.52 484.31 L1102.94 487.33 L1103.36 485.08 L1103.78 484.28 L1104.20 485.12 L1104.62 487.43 L1105.04 463.82 L1105.46 484.28 L1105.88 459.43 L1106.30 484.42 L1106.72 454.01 L1107.14 471.74 L1107.56 446.97 L1107.98 463.72 L1108.40 433.98 L1108.82 466.36 L1109.24 431.80 L1109.66 466.88 L1110.08 461.68 L1110.50 456.98 L1110.92 420.02 L1111.34 448.71 L1111.76 402.10 L1112.18 465.10 L1112.60 405.41 L1113.02 443.07 L1113.44 461.80 L1113.86 448.35 L1114.28 384.52 L1114.70 456.37 L1115.12 384.52 L1115.54 430.10 L1115.96 384.52 L1116.38 451.49 L1116.80 384.52 L1117.22 443.11 L1117.64 384.52 L1118.06 459.40 L1118.48 422.01 L1118.90 431.85 L1119.32 439.14 L1119.74 446.90 L1120.16 384.52 L1120.58 459.19 L1121.00 455.72 L1121.42 454.51 L1121.84 384.52 L1122.26 443.00 L1122.68 384.52 L1123.10 453.44 L1123.52 384.52 L1123.94 433.12 L1124.36 424.56 L1124.78 448.96 L1125.20 385.92 L1125.62 432.36 L1126.04 424.95 L1126.46 459.76 L1126.88 385.28 L1127.30 448.34 L1127.72 398.17 L1128.14 441.85 L1128.56 409.47 L1128.98 462.40 L1129.40 437.70 L1129.82 468.75 L1130.24 409.99 L1130.66 466.53 L1131.08 409.38 L1131.50 468.89 L1131.92 422.58 L1132.34 462.89 L1132.76 429.40 L1133.18 477.87 L1133.60 435.73 L1134.02 467.98 L1134.44 471.06 L1134.86 480.16 L1135.28 479.97 L1135.70 482.01 L1136.12 461.95 L1136.54 481.80 L1136.96 476.34 L1137.38 483.11 L1137.80 482.27 L1138.22 488.28 L1138.64 485.57 L1139.06 486.40 L1139.48 487.97 L1139.90 489.77 L1140.32 490.52 L1140.74 492.98 L1141.16 491.67 L1141.58 493.85 L1142.00 494.63 L1142.42 495.88 L1142.42 496.00Z M1181.40 496.00 L1181.40 496.00 L1181.82 495.50 L1182.24 492.41 L1182.66 493.84 L1183.08 490.20 L1183.50 491.25 L1183.92 480.84 L1184.34 489.61 L1184.76 474.34 L1185.18 485.79 L1185.60 484.26 L1186.02 483.05 L1186.44 478.10 L1186.86 481.78 L1187.28 480.82 L1187.70 478.32 L1188.12 440.61 L1188.54 469.47 L1188.96 440.01 L1189.38 471.72 L1189.80 423.67 L1190.22 469.68 L1190.64 412.79 L1191.06 466.31 L1191.48 401.18 L1191.90 470.49 L1192.32 448.79 L1192.74 453.38 L1193.16 384.52 L1193.58 461.11 L1194.00 386.02 L1194.42 456.77 L1194.84 384.52 L1195.26 456.12 L1195.68 439.32 L1196.10 460.97 L1196.52 384.52 L1196.94 439.91 L1197.36 384.52 L1197.78 444.23 L1198.20 384.52 L1198.62 465.21 L1199.04 416.37 L1199.46 449.45 L1199.88 384.52 L1200.30 462.19 L1200.72 439.27 L1201.14 449.31 L1201.56 416.04 L1201.98 454.63 L1202.40 384.52 L1202.82 465.34 L1203.24 439.19 L1203.66 442.69 L1204.08 384.52 L1204.50 462.89 L1204.92 392.30 L1205.34 472.05 L1205.76 450.23 L1206.18 467.43 L1206.60 400.64 L1207.02 465.13 L1207.44 404.77 L1207.86 469.02 L1208.28 440.44 L1208.70 477.49 L1209.12 443.73 L1209.54 465.81 L1209.96 424.58 L1210.38 471.31 L1210.80 441.74 L1211.22 469.29 L1211.64 473.08 L1212.06 483.54 L1212.48 451.98 L1212.90 477.62 L1213.32 458.88 L1213.74 479.19 L1214.16 482.77 L1214.58 482.23 L1215.00 467.43 L1215.42 486.46 L1215.84 482.26 L1216.26 488.06 L1216.68 480.38 L1217.10 491.59 L1217.52 491.19 L1217.94 492.92 L1218.36 491.95 L1218.78 495.45 L1218.78 496.00Z M1257.00 496.00 L1257.00 496.00 L1257.42 495.79 L1257.84 495.09 L1258.26 494.79 L1258.68 492.89 L1259.10 493.08 L1259.52 486.03 L1259.94 492.57 L1260.36 487.90 L1260.78 489.99 L1261.20 487.13 L1261.62 487.73 L1262.04 473.18 L1262.46 487.63 L1262.88 468.47 L1263.30 485.68 L1263.72 481.21 L1264.14 481.59 L1264.56 476.48 L1264.98 480.20 L1265.40 452.10 L1265.82 480.87 L1266.24 463.43 L1266.66 482.01 L1267.08 467.13 L1267.50 475.34 L1267.92 438.33 L1268.34 478.79 L1268.76 450.37 L1269.18 480.53 L1269.60 466.81 L1270.02 477.70 L1270.44 436.97 L1270.86 471.36 L1271.28 457.22 L1271.70 480.02 L1272.12 469.39 L1272.54 476.58 L1272.96 457.41 L1273.38 483.93 L1273.80 454.91 L1274.22 477.14 L1274.64 434.36 L1275.06 484.39 L1275.48 432.13 L1275.90 476.28 L1276.32 457.29 L1276.74 472.23 L1277.16 461.55 L1277.58 476.04 L1278.00 462.05 L1278.42 475.31 L1278.84 435.10 L1279.26 478.31 L1279.68 474.28 L1280.10 482.03 L1280.52 433.85 L1280.94 472.18 L1281.36 467.67 L1281.78 473.41 L1282.20 462.90 L1282.62 481.00 L1283.04 466.47 L1283.46 480.83 L1283.88 463.65 L1284.30 474.66 L1284.72 445.26 L1285.14 486.19 L1285.56 447.38 L1285.98 481.72 L1286.40 474.66 L1286.82 488.15 L1287.24 474.51 L1287.66 481.51 L1288.08 478.49 L1288.50 486.93 L1288.92 465.85 L1289.34 489.33 L1289.76 473.08 L1290.18 491.40 L1290.60 487.91 L1291.02 487.86 L1291.44 477.04 L1291.86 492.44 L1292.28 481.41 L1292.70 492.94 L1293.12 491.79 L1293.54 494.20 L1293.96 491.62 L1294.38 493.90 L1294.80 494.62 L1295.22 495.21 L1295.64 495.51 L1295.64 496.00Z M1338.40 496.00 L1338.40 496.00 L1338.82 494.70 L1339.24 494.09 L1339.66 493.55 L1340.08 481.41 L1340.50 491.01 L1340.92 472.18 L1341.34 487.71 L1341.76 478.70 L1342.18 485.82 L1342.60 452.21 L1343.02 477.52 L1343.44 445.61 L1343.86 466.93 L1344.28 428.40 L1344.70 464.75 L1345.12 420.10 L1345.54 455.62 L1345.96 437.09 L1346.38 455.79 L1346.80 402.28 L1347.22 437.40 L1347.64 418.22 L1348.06 454.24 L1348.48 384.52 L1348.90 436.71 L1349.32 384.52 L1349.74 450.85 L1350.16 438.09 L1350.58 441.85 L1351.00 384.52 L1351.42 437.55 L1351.84 388.09 L1352.26 456.66 L1352.68 384.52 L1353.10 437.25 L1353.52 454.86 L1353.94 436.64 L1354.36 413.48 L1354.78 445.82 L1355.20 384.52 L1355.62 437.56 L1356.04 411.14 L1356.46 453.72 L1356.88 384.52 L1357.30 437.90 L1357.72 384.52 L1358.14 433.18 L1358.56 384.52 L1358.98 442.10 L1359.40 384.52 L1359.82 457.41 L1360.24 421.40 L1360.66 454.06 L1361.08 385.96 L1361.50 448.70 L1361.92 400.32 L1362.34 449.97 L1362.76 449.84 L1363.18 464.66 L1363.60 425.18 L1364.02 474.18 L1364.44 427.05 L1364.86 473.89 L1365.28 439.79 L1365.70 474.68 L1366.12 451.86 L1366.54 471.97 L1366.96 459.20 L1367.38 480.40 L1367.80 483.66 L1368.22 484.28 L1368.64 472.45 L1369.06 490.97 L1369.48 478.75 L1369.90 489.92 L1370.32 487.41 L1370.74 494.32 L1371.16 494.98 L1371.16 496.00Z M1411.60 496.00 L1411.60 496.00 L1412.02 495.09 L1412.44 494.10 L1412.86 494.08 L1413.28 486.19 L1413.70 492.18 L1414.12 478.42 L1414.54 485.32 L1414.96 468.90 L1415.38 481.05 L1415.80 462.45 L1416.22 482.36 L1416.64 450.91 L1417.06 481.07 L1417.48 444.49 L1417.90 466.94 L1418.32 438.03 L1418.74 471.54 L1419.16 421.07 L1419.58 456.18 L1420.00 424.87 L1420.42 468.84 L1420.84 400.80 L1421.26 447.83 L1421.68 462.02 L1422.10 446.12 L1422.52 431.14 L1422.94 434.43 L1423.36 385.18 L1423.78 439.39 L1424.20 423.03 L1424.62 455.41 L1425.04 384.52 L1425.46 462.20 L1425.88 384.52 L1426.30 461.54 L1426.72 384.52 L1427.14 457.53 L1427.56 384.52 L1427.98 465.46 L1428.40 447.20 L1428.82 464.64 L1429.24 445.92 L1429.66 433.10 L1430.08 412.40 L1430.50 460.99 L1430.92 385.84 L1431.34 433.29 L1431.76 425.46 L1432.18 450.02 L1432.60 384.52 L1433.02 449.13 L1433.44 384.75 L1433.86 458.12 L1434.28 384.52 L1434.70 446.47 L1435.12 384.52 L1435.54 457.73 L1435.96 391.91 L1436.38 460.49 L1436.80 448.02 L1437.22 466.36 L1437.64 405.14 L1438.06 449.55 L1438.48 402.21 L1438.90 474.16 L1439.32 431.04 L1439.74 473.11 L1440.16 421.30 L1440.58 474.82 L1441.00 436.95 L1441.42 465.30 L1441.84 458.46 L1442.26 482.38 L1442.68 447.80 L1443.10 485.05 L1443.52 479.40 L1443.94 478.13 L1444.36 464.76 L1444.78 486.94 L1445.20 476.01 L1445.62 486.76 L1446.04 481.75 L1446.46 491.51 L1446.88 492.40 L1447.30 493.67 L1447.72 493.48 L1448.14 495.88 L1448.14 496.00Z " fill="#7eb26d" fill-opacity="0.3" stroke="none"/><path d="M200.20 496.00 L200.20 393.82 L202.00 395.35 L224.30 496.00 M252.90 496.00 L253.40 495.50 L253.90 494.54 L254.40 493.11 L254.90 491.56 L255.40 489.61 L255.90 487.32 L256.40 485.24 L256.90 482.36 L257.40 480.01 L257.90 476.77 L258.40 473.78 L258.90 471.17 L259.40 468.70 L259.90 464.19 L260.40 461.03 L260.90 458.57 L261.40 456.03 L261.90 451.69 L262.40 447.75 L262.90 446.15 L263.40 439.70 L263.90 439.15 L264.40 433.73 L264.90 429.83 L265.40 426.44 L265.90 424.07 L266.40 423.32 L266.90 417.41 L267.40 416.50 L267.90 414.10 L268.40 410.13 L268.90 408.62 L269.40 403.64 L269.90 401.43 L270.40 400.26 L270.90 401.23 L271.40 398.10 L271.90 395.96 L272.40 396.38 L272.90 394.49 L273.40 392.65 L273.90 395.12 L274.40 394.05 L274.90 390.88 L275.40 392.93 L275.90 392.75 L276.40 395.30 L276.90 394.86 L277.40 392.75 L277.90 397.96 L278.40 393.64 L278.90 396.72 L279.40 400.17 L279.90 398.11 L280.40 401.83 L280.90 401.15 L281.40 406.74 L281.90 409.42 L282.40 410.68 L282.90 414.66 L283.40 414.36 L283.90 418.91 L284.40 421.19 L284.90 423.98 L285.40 426.40 L285.90 431.02 L286.40 434.47 L286.90 435.79 L287.40 439.67 L287.90 440.88 L288.40 446.23 L288.90 449.30 L289.40 453.48 L289.90 456.21 L290.40 458.14 L290.90 461.60 L291.40 465.32 L291.90 467.26 L292.40 471.04 L292.90 473.57 L293.40 476.39 L293.90 479.10 L294.40 482.36 L294.90 484.30 L295.40 486.69 L295.90 488.88 L296.40 490.94 L296.90 492.40 L297.40 493.91 L297.90 495.04 L298.40 495.80 M328.90 496.00 L329.40 495.55 L329.90 494.57 L330.40 493.30 L330.90 491.72 L331.40 490.15 L331.90 488.24 L332.40 485.46 L332.90 483.03 L333.40 480.48 L333.90 477.74 L334.40 475.27 L334.90 472.53 L335.40 468.84 L335.90 465.07 L336.40 462.82 L336.90 459.41 L337.40 456.69 L337.90 454.67 L338.40 450.50 L338.90 446.51 L339.40 443.58 L339.90 440.52 L340.40 434.36 L340.90 435.11 L341.40 431.36 L341.90 428.77 L342.40 425.32 L342.90 419.98 L343.40 417.06 L343.90 412.33 L344.40 412.99 L344.90 406.55 L345.40 404.01 L345.90 402.58 L346.40 399.98 L346.90 399.18 L347.40 395.06 L347.90 392.84 L348.40 392.38 L348.90 390.53 L349.40 391.36 L349.90 387.53 L350.40 393.59 L350.90 390.76 L351.40 386.39 L351.90 386.92 L352.40 387.58 L352.90 388.09 L353.40 387.64 L353.90 396.18 L354.40 400.92 L354.90 401.61 L355.30 470.07 L355.90 389.25 L356.40 457.88 L357.00 401.45 L357.60 468.55 L358.20 419.75 L358.80 471.60 L359.40 450.25 L360.00 473.12 L361.50 477.70 L362.50 482.27 L363.50 479.23 L364.50 486.85 L365.50 482.27 L366.50 488.38 L368.00 485.32 L369.00 491.43 L370.50 489.90 L372.60 496.00 M406.80 496.00 L407.50 494.95 L408.20 493.03 L408.90 491.43 L409.60 488.33 L410.30 486.44 L411.00 478.70 L411.70 476.13 L412.40 469.13 L413.10 469.90 L413.80 467.57 L414.50 452.80 L415.20 444.34 L415.90 440.95 L416.60 436.38 L417.30 430.73 L418.00 427.48 L418.70 439.05 L419.40 424.80 L420.10 426.71 L420.80 440.36 L421.50 438.06 L422.20 420.79 L422.90 419.43 L423.60 398.68 L424.30 386.89 L425.00 405.41 L425.70 384.70 L426.40 384.52 L427.10 384.52 L427.80 407.90 L428.50 415.84 L429.20 416.12 L429.90 418.67 L430.60 419.31 L431.30 401.65 L432.00 393.50 L432.70 397.88 L433.40 413.47 L434.10 409.54 L434.80 407.55 L435.50 438.55 L436.20 418.36 L436.90 414.67 L437.60 421.92 L438.30 426.59 L439.00 437.62 L439.70 450.15 L440.40 437.80 L441.10 452.04 L441.80 446.03 L442.50 447.56 L443.20 461.19 L443.90 464.62 L444.60 461.17 L445.30 467.72 L446.00 477.69 L446.70 480.98 L447.40 483.24 L448.10 481.04 L448.80 484.69 L449.50 490.00 L450.20 490.11 L450.90 492.15 L451.60 494.27 L452.30 495.57 M483.60 496.00 L484.20 495.43 L484.80 494.58 L485.40 490.40 L486.00 488.36 L486.60 485.86 L487.20 479.64 L487.80 479.92 L488.40 471.31 L489.00 467.18 L489.60 473.10 L490.20 468.79 L490.80 464.24 L491.40 462.21 L492.00 448.81 L492.60 454.82 L493.20 445.83 L493.80 454.22 L494.40 422.48 L495.00 438.45 L495.60 431.21 L496.20 423.34 L496.80 408.40 L497.40 425.69 L498.00 403.02 L498.60 418.71 L499.20 416.21 L499.80 415.87 L500.40 447.30 L501.00 420.37 L501.60 437.96 L502.20 457.21 L502.80 430.92 L503.40 462.35 L504.00 466.04 L504.60 475.66 L505.20 472.39 L505.80 464.45 L506.40 446.89 L507.00 432.88 L507.60 412.30 L508.20 437.96 L508.80 405.74 L509.40 420.95 L510.00 419.05 L510.60 393.05 L511.20 407.64 L511.80 406.89 L512.40 400.38 L513.00 397.62 L513.60 421.96 L514.20 418.62 L514.80 427.66 L515.40 432.28 L516.00 428.35 L516.60 439.43 L517.20 440.29 L517.80 446.51 L518.40 440.26 L519.00 452.28 L519.60 455.94 L520.20 462.56 L520.80 478.46 L521.40 480.51 L522.00 484.04 L522.60 489.92 L523.20 494.73 M561.50 496.00 L562.00 495.51 L562.50 494.50 L563.00 493.15 L563.50 491.47 L564.00 489.66 L564.50 487.58 L565.00 485.32 L565.50 482.54 L566.00 480.12 L566.50 477.31 L567.00 474.05 L567.50 471.54 L568.00 468.53 L568.50 464.67 L569.00 462.15 L569.50 458.26 L570.00 455.04 L570.50 452.37 L571.00 448.86 L571.50 444.53 L572.00 441.65 L572.50 438.54 L573.00 435.03 L573.50 431.62 L574.00 428.80 L574.50 426.70 L575.00 422.33 L575.50 420.80 L576.00 417.95 L576.50 414.46 L577.00 412.92 L577.50 411.52 L578.00 409.25 L578.50 406.24 L579.00 407.13 L579.50 405.16 L580.00 404.45 L580.50 400.93 L581.00 400.54 L581.50 399.23 L582.00 400.95 L582.50 399.23 L583.00 398.81 L583.50 399.98 L584.00 402.06 L584.50 402.78 L585.00 402.52 L585.50 403.89 L586.00 407.99 L586.50 409.32 L587.00 412.22 L587.50 413.53 L588.00 416.60 L588.50 421.42 L589.00 468.55 L589.50 468.55 L590.00 468.55 L590.50 436.46 L591.00 440.88 L591.50 443.95 L592.00 449.40 L592.50 452.63 L593.00 457.92 L593.50 461.71 L594.00 465.81 L594.50 470.08 L595.00 474.27 L595.50 477.63 L596.00 481.15 L596.50 484.64 L597.00 487.58 L597.50 490.26 L598.00 492.58 L598.50 494.42 L599.00 495.67 M668.00 496.00 L668.50 495.12 L669.00 493.43 L669.50 491.03 L670.00 488.45 L670.50 485.40 L671.00 482.57 L671.50 479.40 L672.00 476.99 L672.50 474.38 L673.00 473.49 L673.50 471.90 L674.00 470.57 L674.50 470.82 L675.00 471.83 L675.50 471.29 L676.00 473.45 L676.50 474.39 L677.00 476.27 L677.50 478.71 L678.00 480.51 L678.50 483.01 L679.00 485.57 L679.50 488.11 L680.00 490.10 L680.50 492.31 L681.00 494.03 L681.50 495.34 L682.00 496.00 M641.80 496.00 L642.22 495.60 L642.64 492.34 L643.06 494.23 L643.48 488.38 L643.90 490.90 L644.32 487.63 L644.74 490.79 L645.16 477.05 L645.58 487.75 L646.00 470.17 L646.42 486.98 L646.84 471.94 L647.26 482.07 L647.68 452.58 L648.10 482.15 L648.52 453.65 L648.94 478.81 L649.36 441.53 L649.78 479.13 L650.20 439.98 L650.62 475.74 L651.04 427.43 L651.46 477.80 L651.88 421.02 L652.30 471.51 L652.72 448.78 L653.14 456.22 L653.56 436.80 L653.98 449.03 L654.40 396.46 L654.82 441.84 L655.24 384.52 L655.66 448.29 L656.08 384.52 L656.50 438.67 L656.92 420.17 L657.34 441.29 L657.76 384.52 L658.18 451.38 L658.60 416.62 L659.02 440.82 L659.44 412.19 L659.86 445.53 L660.28 445.45 L660.70 466.89 L661.12 384.52 L661.54 464.47 L661.96 428.96 L662.38 447.33 L662.80 422.84 L663.22 451.87 L663.64 384.52 L664.06 443.38 L664.48 384.52 L664.90 446.30 L665.32 384.52 L665.40 496.00 M718.60 496.00 L719.02 495.78 L719.44 494.71 L719.86 495.30 L720.28 490.20 L720.70 494.04 L721.12 487.04 L721.54 493.25 L721.96 481.25 L722.38 493.31 L722.80 483.62 L723.22 492.07 L723.64 481.67 L724.06 487.28 L724.48 468.89 L724.90 488.59 L725.32 477.17 L725.74 487.56 L726.16 459.61 L726.58 488.79 L727.00 424.39 L727.42 485.68 L727.84 456.79 L728.26 484.64 L728.68 464.71 L729.10 482.18 L729.52 454.00 L729.94 475.37 L730.36 449.12 L730.78 471.70 L731.20 450.75 L731.62 482.68 L732.04 455.75 L732.46 470.43 L732.88 458.40 L733.30 480.51 L733.72 461.65 L734.14 471.63 L734.56 402.98 L734.98 464.75 L735.40 451.06 L735.82 464.47 L736.24 384.94 L736.66 468.32 L737.08 387.40 L737.50 471.07 L737.92 432.05 L738.34 470.78 L738.76 406.99 L739.18 465.40 L739.60 384.52 L740.02 473.81 L740.44 385.98 L740.86 470.34 L741.28 384.52 L741.70 455.80 L742.12 439.14 L742.54 468.64 L742.96 444.60 L743.38 472.06 L743.80 401.77 L744.22 462.18 L744.64 404.94 L745.06 470.64 L745.48 461.23 L745.90 478.40 L746.32 421.42 L746.74 477.55 L747.16 449.13 L747.58 473.96 L748.00 440.14 L748.42 478.23 L748.84 467.46 L749.26 481.61 L749.68 449.56 L750.10 480.65 L750.52 468.21 L750.94 482.68 L751.36 464.73 L751.78 489.95 L752.20 479.27 L752.62 487.50 L753.04 483.45 L753.46 490.31 L753.88 487.69 L754.30 493.90 L754.72 492.13 L755.14 493.77 L755.56 494.27 L755.98 495.72 M794.20 496.00 L794.62 495.46 L795.04 493.41 L795.46 494.10 L795.88 492.71 L796.30 493.18 L796.72 492.31 L797.14 491.39 L797.56 484.35 L797.98 487.83 L798.40 484.89 L798.82 488.36 L799.24 467.00 L799.66 482.54 L800.08 485.20 L800.50 482.03 L800.92 476.89 L801.34 482.57 L801.76 464.51 L802.18 480.99 L802.60 447.28 L803.02 475.95 L803.44 472.81 L803.86 466.91 L804.28 462.02 L804.70 475.27 L805.12 464.10 L805.54 459.97 L805.96 423.58 L806.38 458.00 L806.80 435.44 L807.22 461.45 L807.64 410.39 L808.06 460.82 L808.48 425.31 L808.90 466.18 L809.32 452.43 L809.74 437.67 L810.16 393.68 L810.58 464.79 L811.00 411.93 L811.42 434.87 L811.84 406.94 L812.26 433.19 L812.68 447.68 L813.10 433.04 L813.52 455.38 L813.94 442.57 L814.36 438.23 L814.78 454.25 L815.20 388.07 L815.62 456.08 L816.04 409.05 L816.46 461.56 L816.88 446.58 L817.30 453.38 L817.72 415.75 L818.14 450.72 L818.56 384.52 L818.98 452.81 L819.40 447.30 L819.82 453.11 L820.24 456.58 L820.66 454.84 L821.08 428.07 L821.50 469.85 L821.92 410.43 L822.34 450.07 L822.76 443.23 L823.18 456.30 L823.60 464.47 L824.02 460.72 L824.44 469.44 L824.86 470.29 L825.28 473.71 L825.70 484.55 L826.12 467.39 L826.54 480.55 L826.96 477.29 L827.38 487.79 L827.80 464.02 L828.22 487.26 L828.64 490.80 L829.06 493.02 L829.48 493.14 L829.90 495.82 M870.90 496.00 L871.32 495.46 L871.74 494.39 L872.16 494.51 L872.58 489.60 L873.00 492.09 L873.42 485.72 L873.84 490.16 L874.26 481.69 L874.68 491.57 L875.10 476.02 L875.52 484.27 L875.94 476.77 L876.36 487.17 L876.78 467.00 L877.20 483.25 L877.62 476.88 L878.04 483.99 L878.46 451.82 L878.88 476.64 L879.30 462.48 L879.72 474.20 L880.14 436.80 L880.56 477.53 L880.98 435.72 L881.40 467.58 L881.82 431.08 L882.24 474.38 L882.66 415.34 L883.08 465.22 L883.50 415.96 L883.92 452.88 L884.34 412.12 L884.76 454.02 L885.18 425.17 L885.60 469.97 L886.02 386.88 L886.44 446.63 L886.86 458.35 L887.28 460.26 L887.70 386.10 L888.12 436.02 L888.54 384.52 L888.96 455.71 L889.38 434.45 L889.80 459.39 L890.22 409.54 L890.64 464.44 L891.06 384.52 L891.48 460.77 L891.90 384.79 L892.32 461.22 L892.74 384.52 L893.16 446.55 L893.58 387.86 L894.00 457.18 L894.42 449.28 L894.84 460.18 L895.26 384.52 L895.68 455.95 L896.10 403.65 L896.52 462.93 L896.94 400.84 L897.36 472.94 L897.78 407.67 L898.20 467.80 L898.62 421.39 L899.04 459.39 L899.46 424.90 L899.88 473.88 L900.30 428.57 L900.72 465.91 L901.14 443.62 L901.56 473.36 L901.98 452.10 L902.40 474.24 L902.82 451.62 L903.24 482.74 L903.66 477.86 L904.08 487.17 L904.50 467.37 L904.92 485.70 L905.34 488.03 L905.76 488.38 L906.18 480.24 L906.60 492.49 L907.02 486.08 L907.44 492.54 L907.86 491.56 L908.28 495.09 L908.70 496.00 M950.00 496.00 L950.42 495.46 L950.84 493.12 L951.26 493.93 L951.68 487.90 L952.10 492.75 L952.52 491.10 L952.94 490.50 L953.36 478.49 L953.78 488.19 L954.20 486.50 L954.62 489.67 L955.04 466.26 L955.46 486.99 L955.88 461.87 L956.30 482.27 L956.72 481.43 L957.14 481.59 L957.56 479.18 L957.98 476.22 L958.40 438.78 L958.82 477.40 L959.24 435.21 L959.66 477.08 L960.08 426.56 L960.50 471.08 L960.92 419.06 L961.34 480.06 L961.76 410.73 L962.18 474.38 L962.60 435.19 L963.02 467.71 L963.44 395.56 L963.86 473.57 L964.28 388.57 L964.70 472.25 L965.12 384.52 L965.54 472.18 L965.96 386.19 L966.38 453.80 L966.80 431.32 L967.22 471.82 L967.64 384.52 L968.06 448.03 L968.48 384.52 L968.90 446.83 L969.32 416.10 L969.74 468.12 L970.16 432.31 L970.58 447.88 L971.00 448.70 L971.42 452.34 L971.84 453.70 L972.26 463.95 L972.68 449.02 L973.10 449.47 L973.52 384.52 L973.94 469.45 L974.36 384.52 L974.78 467.73 L975.20 384.52 L975.62 467.55 L976.04 398.78 L976.46 473.79 L976.88 439.13 L977.30 461.87 L977.72 408.71 L978.14 479.31 L978.56 421.72 L978.98 477.86 L979.40 461.25 L979.82 477.77 L980.24 476.66 L980.66 476.55 L981.08 454.25 L981.50 482.10 L981.92 459.52 L982.34 486.88 L982.76 470.53 L983.18 490.29 L983.60 479.67 L984.02 493.70 L984.44 492.73 L984.86 494.71 L985.28 495.60 M1025.60 496.00 L1026.02 495.75 L1026.44 492.72 L1026.86 494.31 L1027.28 487.60 L1027.70 492.20 L1028.12 482.84 L1028.54 491.02 L1028.96 478.03 L1029.38 490.53 L1029.80 470.40 L1030.22 489.72 L1030.64 462.33 L1031.06 488.41 L1031.48 456.08 L1031.90 487.52 L1032.32 475.71 L1032.74 485.94 L1033.16 439.58 L1033.58 476.14 L1034.00 465.03 L1034.42 481.40 L1034.84 423.40 L1035.26 475.29 L1035.68 415.04 L1036.10 474.93 L1036.52 440.92 L1036.94 476.29 L1037.36 463.14 L1037.78 468.93 L1038.20 397.39 L1038.62 476.60 L1039.04 458.67 L1039.46 463.74 L1039.88 449.85 L1040.30 471.26 L1040.72 384.52 L1041.14 460.91 L1041.56 448.22 L1041.98 468.69 L1042.40 386.99 L1042.82 455.11 L1043.24 421.09 L1043.66 475.79 L1044.08 419.60 L1044.50 465.04 L1044.92 434.28 L1045.34 470.64 L1045.76 384.52 L1046.18 475.03 L1046.60 384.52 L1047.02 459.66 L1047.44 421.28 L1047.86 469.71 L1048.28 384.52 L1048.70 457.48 L1049.12 384.52 L1049.54 460.90 L1049.96 446.10 L1050.38 455.33 L1050.80 384.52 L1051.22 470.41 L1051.64 410.89 L1052.06 460.72 L1052.48 384.52 L1052.90 472.38 L1053.32 391.61 L1053.74 469.41 L1054.16 407.01 L1054.58 466.91 L1055.00 415.00 L1055.42 474.46 L1055.84 462.49 L1056.26 477.18 L1056.68 442.21 L1057.10 485.33 L1057.52 453.61 L1057.94 481.65 L1058.36 462.61 L1058.78 489.92 L1059.20 482.95 L1059.62 491.44 L1060.04 478.72 L1060.46 491.51 L1060.88 484.79 L1061.30 493.83 L1061.72 492.57 L1062.14 495.93 M1100.00 496.00 L1100.42 495.22 L1100.84 492.50 L1101.26 492.87 L1101.68 493.12 L1102.10 492.45 L1102.52 484.31 L1102.94 487.33 L1103.36 485.08 L1103.78 484.28 L1104.20 485.12 L1104.62 487.43 L1105.04 463.82 L1105.46 484.28 L1105.88 459.43 L1106.30 484.42 L1106.72 454.01 L1107.14 471.74 L1107.56 446.97 L1107.98 463.72 L1108.40 433.98 L1108.82 466.36 L1109.24 431.80 L1109.66 466.88 L1110.08 461.68 L1110.50 456.98 L1110.92 420.02 L1111.34 448.71 L1111.76 402.10 L1112.18 465.10 L1112.60 405.41 L1113.02 443.07 L1113.44 461.80 L1113.86 448.35 L1114.28 384.52 L1114.70 456.37 L1115.12 384.52 L1115.54 430.10 L1115.96 384.52 L1116.38 451.49 L1116.80 384.52 L1117.22 443.11 L1117.64 384.52 L1118.06 459.40 L1118.48 422.01 L1118.90 431.85 L1119.32 439.14 L1119.74 446.90 L1120.16 384.52 L1120.58 459.19 L1121.00 455.72 L1121.42 454.51 L1121.84 384.52 L1122.26 443.00 L1122.68 384.52 L1123.10 453.44 L1123.52 384.52 L1123.94 433.12 L1124.36 424.56 L1124.78 448.96 L1125.20 385.92 L1125.62 432.36 L1126.04 424.95 L1126.46 459.76 L1126.88 385.28 L1127.30 448.34 L1127.72 398.17 L1128.14 441.85 L1128.56 409.47 L1128.98 462.40 L1129.40 437.70 L1129.82 468.75 L1130.24 409.99 L1130.66 466.53 L1131.08 409.38 L1131.50 468.89 L1131.92 422.58 L1132.34 462.89 L1132.76 429.40 L1133.18 477.87 L1133.60 435.73 L1134.02 467.98 L1134.44 471.06 L1134.86 480.16 L1135.28 479.97 L1135.70 482.01 L1136.12 461.95 L1136.54 481.80 L1136.96 476.34 L1137.38 483.11 L1137.80 482.27 L1138.22 488.28 L1138.64 485.57 L1139.06 486.40 L1139.48 487.97 L1139.90 489.77 L1140.32 490.52 L1140.74 492.98 L1141.16 491.67 L1141.58 493.85 L1142.00 494.63 L1142.42 495.88 M1181.40 496.00 L1181.82 495.50 L1182.24 492.41 L1182.66 493.84 L1183.08 490.20 L1183.50 491.25 L1183.92 480.84 L1184.34 489.61 L1184.76 474.34 L1185.18 485.79 L1185.60 484.26 L1186.02 483.05 L1186.44 478.10 L1186.86 481.78 L1187.28 480.82 L1187.70 478.32 L1188.12 440.61 L1188.54 469.47 L1188.96 440.01 L1189.38 471.72 L1189.80 423.67 L1190.22 469.68 L1190.64 412.79 L1191.06 466.31 L1191.48 401.18 L1191.90 470.49 L1192.32 448.79 L1192.74 453.38 L1193.16 384.52 L1193.58 461.11 L1194.00 386.02 L1194.42 456.77 L1194.84 384.52 L1195.26 456.12 L1195.68 439.32 L1196.10 460.97 L1196.52 384.52 L1196.94 439.91 L1197.36 384.52 L1197.78 444.23 L1198.20 384.52 L1198.62 465.21 L1199.04 416.37 L1199.46 449.45 L1199.88 384.52 L1200.30 462.19 L1200.72 439.27 L1201.14 449.31 L1201.56 416.04 L1201.98 454.63 L1202.40 384.52 L1202.82 465.34 L1203.24 439.19 L1203.66 442.69 L1204.08 384.52 L1204.50 462.89 L1204.92 392.30 L1205.34 472.05 L1205.76 450.23 L1206.18 467.43 L1206.60 400.64 L1207.02 465.13 L1207.44 404.77 L1207.86 469.02 L1208.28 440.44 L1208.70 477.49 L1209.12 443.73 L1209.54 465.81 L1209.96 424.58 L1210.38 471.31 L1210.80 441.74 L1211.22 469.29 L1211.64 473.08 L1212.06 483.54 L1212.48 451.98 L1212.90 477.62 L1213.32 458.88 L1213.74 479.19 L1214.16 482.77 L1214.58 482.23 L1215.00 467.43 L1215.42 486.46 L1215.84 482.26 L1216.26 488.06 L1216.68 480.38 L1217.10 491.59 L1217.52 491.19 L1217.94 492.92 L1218.36 491.95 L1218.78 495.45 M1257.00 496.00 L1257.42 495.79 L1257.84 495.09 L1258.26 494.79 L1258.68 492.89 L1259.10 493.08 L1259.52 486.03 L1259.94 492.57 L1260.36 487.90 L1260.78 489.99 L1261.20 487.13 L1261.62 487.73 L1262.04 473.18 L1262.46 487.63 L1262.88 468.47 L1263.30 485.68 L1263.72 481.21 L1264.14 481.59 L1264.56 476.48 L1264.98 480.20 L1265.40 452.10 L1265.82 480.87 L1266.24 463.43 L1266.66 482.01 L1267.08 467.13 L1267.50 475.34 L1267.92 438.33 L1268.34 478.79 L1268.76 450.37 L1269.18 480.53 L1269.60 466.81 L1270.02 477.70 L1270.44 436.97 L1270.86 471.36 L1271.28 457.22 L1271.70 480.02 L1272.12 469.39 L1272.54 476.58 L1272.96 457.41 L1273.38 483.93 L1273.80 454.91 L1274.22 477.14 L1274.64 434.36 L1275.06 484.39 L1275.48 432.13 L1275.90 476.28 L1276.32 457.29 L1276.74 472.23 L1277.16 461.55 L1277.58 476.04 L1278.00 462.05 L1278.42 475.31 L1278.84 435.10 L1279.26 478.31 L1279.68 474.28 L1280.10 482.03 L1280.52 433.85 L1280.94 472.18 L1281.36 467.67 L1281.78 473.41 L1282.20 462.90 L1282.62 481.00 L1283.04 466.47 L1283.46 480.83 L1283.88 463.65 L1284.30 474.66 L1284.72 445.26 L1285.14 486.19 L1285.56 447.38 L1285.98 481.72 L1286.40 474.66 L1286.82 488.15 L1287.24 474.51 L1287.66 481.51 L1288.08 478.49 L1288.50 486.93 L1288.92 465.85 L1289.34 489.33 L1289.76 473.08 L1290.18 491.40 L1290.60 487.91 L1291.02 487.86 L1291.44 477.04 L1291.86 492.44 L1292.28 481.41 L1292.70 492.94 L1293.12 491.79 L1293.54 494.20 L1293.96 491.62 L1294.38 493.90 L1294.80 494.62 L1295.22 495.21 L1295.64 495.51 M1338.40 496.00 L1338.82 494.70 L1339.24 494.09 L1339.66 493.55 L1340.08 481.41 L1340.50 491.01 L1340.92 472.18 L1341.34 487.71 L1341.76 478.70 L1342.18 485.82 L1342.60 452.21 L1343.02 477.52 L1343.44 445.61 L1343.86 466.93 L1344.28 428.40 L1344.70 464.75 L1345.12 420.10 L1345.54 455.62 L1345.96 437.09 L1346.38 455.79 L1346.80 402.28 L1347.22 437.40 L1347.64 418.22 L1348.06 454.24 L1348.48 384.52 L1348.90 436.71 L1349.32 384.52 L1349.74 450.85 L1350.16 438.09 L1350.58 441.85 L1351.00 384.52 L1351.42 437.55 L1351.84 388.09 L1352.26 456.66 L1352.68 384.52 L1353.10 437.25 L1353.52 454.86 L1353.94 436.64 L1354.36 413.48 L1354.78 445.82 L1355.20 384.52 L1355.62 437.56 L1356.04 411.14 L1356.46 453.72 L1356.88 384.52 L1357.30 437.90 L1357.72 384.52 L1358.14 433.18 L1358.56 384.52 L1358.98 442.10 L1359.40 384.52 L1359.82 457.41 L1360.24 421.40 L1360.66 454.06 L1361.08 385.96 L1361.50 448.70 L1361.92 400.32 L1362.34 449.97 L1362.76 449.84 L1363.18 464.66 L1363.60 425.18 L1364.02 474.18 L1364.44 427.05 L1364.86 473.89 L1365.28 439.79 L1365.70 474.68 L1366.12 451.86 L1366.54 471.97 L1366.96 459.20 L1367.38 480.40 L1367.80 483.66 L1368.22 484.28 L1368.64 472.45 L1369.06 490.97 L1369.48 478.75 L1369.90 489.92 L1370.32 487.41 L1370.74 494.32 L1371.16 494.98 M1411.60 496.00 L1412.02 495.09 L1412.44 494.10 L1412.86 494.08 L1413.28 486.19 L1413.70 492.18 L1414.12 478.42 L1414.54 485.32 L1414.96 468.90 L1415.38 481.05 L1415.80 462.45 L1416.22 482.36 L1416.64 450.91 L1417.06 481.07 L1417.48 444.49 L1417.90 466.94 L1418.32 438.03 L1418.74 471.54 L1419.16 421.07 L1419.58 456.18 L1420.00 424.87 L1420.42 468.84 L1420.84 400.80 L1421.26 447.83 L1421.68 462.02 L1422.10 446.12 L1422.52 431.14 L1422.94 434.43 L1423.36 385.18 L1423.78 439.39 L1424.20 423.03 L1424.62 455.41 L1425.04 384.52 L1425.46 462.20 L1425.88 384.52 L1426.30 461.54 L1426.72 384.52 L1427.14 457.53 L1427.56 384.52 L1427.98 465.46 L1428.40 447.20 L1428.82 464.64 L1429.24 445.92 L1429.66 433.10 L1430.08 412.40 L1430.50 460.99 L1430.92 385.84 L1431.34 433.29 L1431.76 425.46 L1432.18 450.02 L1432.60 384.52 L1433.02 449.13 L1433.44 384.75 L1433.86 458.12 L1434.28 384.52 L1434.70 446.47 L1435.12 384.52 L1435.54 457.73 L1435.96 391.91 L1436.38 460.49 L1436.80 448.02 L1437.22 466.36 L1437.64 405.14 L1438.06 449.55 L1438.48 402.21 L1438.90 474.16 L1439.32 431.04 L1439.74 473.11 L1440.16 421.30 L1440.58 474.82 L1441.00 436.95 L1441.42 465.30 L1441.84 458.46 L1442.26 482.38 L1442.68 447.80 L1443.10 485.05 L1443.52 479.40 L1443.94 478.13 L1444.36 464.76 L1444.78 486.94 L1445.20 476.01 L1445.62 486.76 L1446.04 481.75 L1446.46 491.51 L1446.88 492.40 L1447.30 493.67 L1447.72 493.48 L1448.14 495.88 " fill="none" stroke="#7eb26d" stroke-width="1" stroke-linejoin="round"/><rect x="200" y="495" width="1248.7" height="2" fill="#42698e"/><rect x="200" y="494.6" width="441.8" height="1.8" fill="#8fae88"/><rect x="641.8" y="495" width="806.9" height="1" fill="#5f9a9a" fill-opacity="0.7"/><path d="M665.40 488.98 L666.10 489.40 L666.80 489.51 L667.50 489.48 L668.20 489.63 L668.90 488.96 L669.60 489.74 L670.30 488.92 L671.00 489.77 L671.70 489.73 L672.40 489.27 L673.10 489.42 L673.80 489.02 L674.50 489.77 L675.20 489.28 L675.90 489.77 L676.60 489.41 L677.30 488.92 L678.00 489.08 L678.70 489.72 L679.40 489.60 L680.10 489.50 L680.80 489.60 L681.50 489.62 L682.20 489.02 L682.90 489.40 L683.00 482.30 L683.40 482.30 L683.60 492.00 L683.60 489.02 L684.30 489.04 L685.00 489.76 L685.70 489.47 L686.40 489.06 L687.10 489.84 L687.80 489.32 L688.50 489.43 L689.20 489.84 L689.90 489.24 L690.60 489.24 L691.30 489.88 L692.00 493.67 L692.70 493.80 L693.40 493.68 L694.10 493.72 L694.80 492.76 L695.50 493.32 L696.20 493.85 L696.90 493.82 L697.60 493.00 L698.30 493.21 L699.00 493.46 L699.70 493.14 L700.40 493.34 L701.10 492.78 L701.80 493.22 L702.50 493.31 L703.20 492.72 L703.90 492.87 L704.60 493.86 L705.30 493.63 L706.00 493.82 L706.70 493.46 L707.40 493.67 L708.10 493.76 L708.80 493.76 L709.50 492.74 L710.20 493.47 L710.90 493.02 L711.60 493.51 L712.30 493.03 L713.00 493.35 L713.70 493.81 L714.40 493.45 L715.10 493.00 L715.80 493.32 L716.50 493.22 L717.20 493.84 L717.90 493.05 L718.60 491.54 L719.30 491.45 L720.00 491.32 L720.70 491.25 L721.40 490.74 L722.10 490.71 L722.80 491.15 L723.50 490.89 L724.20 491.37 L724.90 491.48 L725.60 491.54 L726.30 491.64 L727.00 491.38 L727.70 491.25 L728.40 490.89 L729.10 491.32 L729.80 491.44 L730.50 491.06 L731.20 490.88 L731.50 458.70 L731.90 458.70 L732.10 492.00 L731.90 491.29 L732.60 492.08 L733.30 491.74 L734.00 458.70 L734.40 458.70 L734.60 492.00 L734.00 490.61 L734.70 491.20 L735.40 491.12 L736.10 491.68 L736.80 490.86 L737.50 491.68 L738.20 491.04 L738.90 491.58 L739.60 491.86 L740.30 491.33 L741.00 491.69 L741.70 491.26 L742.40 491.63 L743.10 490.70 L743.80 490.51 L744.50 491.44 L745.20 492.04 L745.90 491.17 L746.60 476.51 L747.30 476.36 L748.00 476.29 L748.70 476.22 L749.40 476.40 L750.10 476.20 L750.80 476.48 L751.50 476.22 L752.20 491.84 L752.90 490.83 L753.60 491.96 L754.30 490.58 L755.00 491.30 L755.70 491.74 L756.40 493.35 L757.10 493.90 L757.80 493.32 L758.50 493.32 L759.20 493.52 L759.90 493.17 L760.60 493.13 L761.30 493.41 L762.00 488.15 L762.70 487.73 L763.40 487.57 L764.10 487.76 L764.80 488.08 L765.50 487.69 L766.20 487.82 L766.90 487.54 L767.60 493.34 L768.30 493.68 L769.00 492.90 L769.70 493.08 L770.40 493.87 L771.10 493.69 L771.80 493.32 L772.50 492.83 L773.20 493.77 L773.90 493.53 L774.60 493.68 L775.30 493.89 L776.00 493.77 L776.70 493.21 L777.40 492.89 L778.10 493.05 L778.80 493.31 L779.50 493.31 L780.20 492.93 L780.90 492.92 L781.60 493.46 L782.30 493.42 L783.00 493.12 L783.70 493.89 L784.40 493.46 L785.10 492.75 L785.80 493.19 L786.50 493.65 L787.20 493.07 L787.90 493.53 L788.60 492.70 L789.30 493.07 L790.00 493.71 L790.70 493.40 L791.40 493.50 L792.10 492.94 L792.80 493.30 L793.50 493.36 L794.20 491.53 L794.90 492.10 L795.60 491.16 L796.30 490.75 L797.00 490.67 L797.70 490.77 L798.40 491.82 L799.10 491.79 L799.80 490.52 L800.00 467.00 L800.40 467.00 L800.60 492.00 L800.50 491.02 L801.20 491.07 L801.90 490.93 L802.60 491.95 L803.30 491.06 L804.00 491.12 L804.70 491.92 L805.00 458.70 L805.40 458.70 L805.60 492.00 L805.40 492.04 L806.10 491.49 L806.80 490.57 L807.50 491.87 L808.20 491.94 L808.90 490.99 L809.60 492.04 L810.30 492.02 L811.00 491.12 L811.70 490.85 L812.40 491.90 L813.10 491.77 L813.80 490.78 L814.50 490.80 L815.20 490.97 L815.90 490.68 L816.60 491.12 L817.30 490.60 L818.00 449.20 L818.40 449.20 L818.60 492.00 L818.00 491.82 L818.70 490.89 L819.40 490.95 L820.10 490.56 L820.80 491.05 L821.50 491.63 L822.20 490.93 L822.90 490.70 L823.60 491.84 L824.30 490.75 L825.00 491.66 L825.70 492.03 L826.40 492.02 L827.10 490.86 L827.80 490.71 L828.50 490.92 L829.20 491.44 L829.90 490.89 L830.60 493.43 L831.30 492.96 L832.00 493.75 L832.70 492.85 L833.40 493.32 L834.10 493.35 L834.80 493.02 L835.50 493.63 L836.20 493.16 L836.90 489.47 L837.60 489.29 L838.30 489.08 L839.00 489.22 L839.70 489.01 L840.40 489.26 L841.10 489.20 L841.80 489.21 L842.50 489.03 L843.20 489.18 L843.90 489.81 L844.60 489.78 L845.30 489.03 L846.00 488.93 L846.70 489.56 L847.40 493.12 L848.10 493.20 L848.80 493.49 L849.50 493.54 L850.20 493.00 L850.90 493.72 L851.60 493.12 L852.30 493.45 L853.00 492.92 L853.70 492.84 L854.40 493.80 L855.10 493.58 L855.80 493.56 L856.50 492.75 L857.20 492.75 L857.90 492.89 L858.60 492.94 L859.30 493.06 L860.00 493.16 L860.70 492.75 L861.40 493.07 L862.10 493.47 L862.80 492.92 L863.50 493.71 L864.20 493.38 L864.90 493.56 L865.60 493.01 L866.30 493.22 L867.00 493.52 L867.70 493.12 L868.40 492.70 L869.10 493.70 L869.80 493.63 L870.50 493.04 L871.20 491.87 L871.90 490.58 L872.60 490.68 L873.30 490.84 L874.00 491.70 L874.70 491.61 L875.40 491.70 L876.10 490.95 L876.80 492.01 L877.50 491.99 L878.20 491.68 L878.90 491.50 L879.60 490.59 L880.30 491.19 L881.00 491.99 L881.70 491.72 L882.40 491.62 L883.10 490.92 L883.80 492.05 L884.50 491.37 L885.20 490.60 L885.90 491.16 L886.00 452.80 L886.40 452.80 L886.60 492.00 L886.60 491.00 L887.30 491.63 L888.00 490.88 L888.70 491.32 L889.40 492.00 L889.50 466.00 L889.90 466.00 L890.10 492.00 L890.10 490.98 L890.80 490.73 L891.50 491.03 L892.20 491.38 L892.90 490.77 L893.60 491.46 L894.30 491.73 L895.00 490.68 L895.70 491.08 L896.00 460.00 L896.40 460.00 L896.60 492.00 L896.40 490.60 L897.10 490.82 L897.80 491.22 L898.50 491.02 L899.20 491.08 L899.90 490.61 L900.60 492.09 L901.00 462.00 L901.40 462.00 L901.60 492.00 L901.30 490.63 L902.00 492.07 L902.70 490.67 L903.40 491.19 L904.10 491.37 L904.80 491.97 L905.50 491.50 L906.20 491.54 L906.90 490.89 L907.00 460.00 L907.40 460.00 L907.60 492.00 L907.60 490.54 L908.30 491.84 L909.00 493.06 L909.70 492.92 L910.40 493.47 L911.10 493.71 L911.80 493.81 L912.50 492.90 L913.20 493.64 L913.90 489.24 L914.60 488.68 L915.30 488.82 L916.00 489.05 L916.70 489.33 L917.40 488.54 L918.10 489.13 L918.80 489.21 L919.50 489.44 L920.20 489.00 L920.90 488.80 L921.60 488.58 L922.30 488.66 L923.00 493.23 L923.70 493.86 L924.40 492.81 L925.10 492.75 L925.80 493.23 L926.50 492.93 L927.20 493.57 L927.90 492.70 L928.60 493.71 L929.30 493.73 L930.00 493.64 L930.70 493.21 L931.40 493.04 L932.10 493.49 L932.80 493.32 L933.50 493.21 L934.20 493.11 L934.90 493.23 L935.60 493.50 L936.30 493.69 L937.00 493.78 L937.70 492.90 L938.40 493.05 L939.10 493.23 L939.80 493.38 L940.50 493.12 L941.20 492.93 L941.90 492.80 L942.60 493.09 L943.30 493.25 L944.00 493.87 L944.70 493.79 L945.40 493.74 L946.10 493.87 L946.80 493.85 L947.50 493.44 L948.00 472.90 L948.40 472.90 L948.60 492.00 L948.20 493.67 L948.90 492.77 L949.60 493.51 L950.30 490.98 L951.00 492.02 L951.70 491.54 L952.40 491.05 L953.10 490.54 L953.80 491.59 L954.50 490.64 L955.20 491.10 L955.90 491.17 L956.60 491.40 L957.30 490.68 L958.00 491.92 L958.70 490.68 L959.40 490.91 L960.10 491.35 L960.80 491.28 L961.50 490.86 L962.20 490.68 L962.90 491.44 L963.60 491.15 L964.30 491.20 L965.00 491.38 L965.70 491.71 L966.40 492.09 L967.10 490.66 L967.80 491.13 L968.50 492.04 L969.20 491.74 L969.90 491.74 L970.60 490.88 L971.30 490.52 L972.00 490.84 L972.70 491.63 L973.40 491.92 L974.10 491.90 L974.80 491.97 L975.50 490.77 L976.20 491.05 L976.90 491.59 L977.60 490.70 L978.30 491.68 L979.00 491.65 L979.70 491.47 L980.40 491.38 L981.10 490.68 L981.80 491.58 L982.50 490.81 L983.20 491.84 L983.90 490.68 L984.20 462.20 L984.60 462.20 L984.80 492.00 L984.60 490.68 L985.30 490.80 L986.00 493.37 L986.70 493.05 L987.40 493.52 L988.10 493.16 L988.80 492.87 L989.50 493.75 L990.20 484.89 L990.90 485.15 L991.60 484.54 L992.30 484.70 L993.00 485.00 L993.70 484.38 L994.40 484.88 L995.10 484.68 L995.80 485.05 L996.50 493.17 L997.20 493.75 L997.90 493.43 L998.60 492.79 L999.30 493.10 L1000.00 492.96 L1000.70 493.77 L1001.40 493.41 L1002.10 492.75 L1002.80 492.90 L1003.50 493.13 L1004.20 493.26 L1004.90 493.39 L1005.60 493.17 L1006.30 493.12 L1007.00 492.71 L1007.70 493.39 L1008.40 493.10 L1009.10 492.72 L1009.80 493.25 L1010.50 493.88 L1011.20 492.75 L1011.90 492.87 L1012.60 493.51 L1013.30 493.03 L1014.00 493.03 L1014.70 493.30 L1015.40 493.01 L1016.10 493.38 L1016.80 493.33 L1017.50 493.85 L1018.20 493.89 L1018.90 492.74 L1019.60 493.37 L1020.30 493.63 L1021.00 493.75 L1021.70 493.63 L1022.40 493.46 L1023.10 493.46 L1023.80 493.14 L1024.50 493.04 L1025.20 493.65 L1025.90 492.00 L1026.60 490.99 L1027.30 491.68 L1028.00 491.52 L1028.70 491.38 L1029.40 490.60 L1030.10 491.02 L1030.80 491.27 L1031.50 490.89 L1032.20 491.06 L1032.90 490.51 L1033.60 491.23 L1034.30 491.41 L1035.00 490.77 L1035.70 490.98 L1036.40 491.66 L1037.10 492.00 L1037.80 491.97 L1038.50 490.63 L1039.20 491.43 L1039.90 491.07 L1040.60 491.19 L1041.30 490.61 L1042.00 491.94 L1042.70 490.91 L1043.40 490.76 L1044.10 491.63 L1044.80 491.14 L1045.50 491.46 L1046.20 491.54 L1046.90 491.67 L1047.60 491.46 L1048.30 491.80 L1049.00 491.05 L1049.70 490.80 L1050.40 491.90 L1051.10 491.98 L1051.80 491.02 L1052.50 491.54 L1053.20 491.59 L1053.90 490.59 L1054.60 490.57 L1055.30 491.04 L1056.00 491.46 L1056.70 491.24 L1057.40 491.98 L1058.10 492.08 L1058.80 491.48 L1059.50 491.03 L1059.80 457.50 L1060.20 457.50 L1060.40 492.00 L1060.20 490.75 L1060.90 491.73 L1061.60 491.80 L1062.30 493.21 L1063.00 493.35 L1063.70 493.41 L1064.40 493.37 L1065.10 493.49 L1065.80 493.42 L1066.50 493.10 L1067.20 493.59 L1067.90 493.01 L1068.60 489.26 L1069.30 488.81 L1070.00 489.48 L1070.70 488.78 L1071.40 489.44 L1072.10 488.51 L1072.80 489.16 L1073.50 493.63 L1074.20 493.13 L1074.90 493.89 L1075.60 492.97 L1076.30 493.61 L1077.00 492.81 L1077.70 492.73 L1078.40 492.86 L1079.10 492.77 L1079.80 493.30 L1080.50 493.37 L1081.20 492.92 L1081.90 493.83 L1082.60 493.14 L1083.30 492.88 L1084.00 492.91 L1084.70 493.59 L1085.40 493.81 L1086.10 492.89 L1086.80 492.73 L1087.50 493.63 L1088.20 492.99 L1088.90 493.88 L1089.60 493.30 L1090.30 493.46 L1091.00 493.11 L1091.70 493.66 L1092.40 493.25 L1093.10 493.09 L1093.80 493.78 L1094.50 492.83 L1095.20 493.58 L1095.90 492.78 L1096.60 493.47 L1097.30 493.18 L1098.00 493.74 L1098.70 492.77 L1099.40 493.38 L1100.10 491.97 L1100.80 491.50 L1101.50 490.90 L1102.20 491.19 L1102.90 490.83 L1103.00 460.00 L1103.40 460.00 L1103.60 492.00 L1103.60 491.53 L1104.30 492.09 L1105.00 491.41 L1105.70 491.88 L1106.40 490.93 L1107.10 491.82 L1107.80 491.03 L1108.50 491.93 L1109.20 491.59 L1109.90 491.22 L1110.60 491.91 L1111.30 491.91 L1112.00 455.00 L1112.40 455.00 L1112.60 492.00 L1112.00 491.75 L1112.70 490.79 L1113.40 492.09 L1114.10 490.54 L1114.80 492.06 L1115.00 456.00 L1115.40 456.00 L1115.60 492.00 L1115.50 491.96 L1116.20 491.68 L1116.90 490.77 L1117.60 490.64 L1118.30 491.97 L1119.00 491.91 L1119.70 490.55 L1120.40 491.77 L1121.00 443.00 L1121.40 443.00 L1121.60 492.00 L1121.10 490.56 L1121.80 490.87 L1122.50 490.67 L1123.20 492.09 L1123.90 491.91 L1124.60 491.28 L1125.30 491.19 L1126.00 491.60 L1126.70 491.68 L1127.40 490.68 L1128.10 491.29 L1128.80 491.06 L1129.50 492.05 L1130.20 491.67 L1130.90 490.78 L1131.60 490.61 L1132.30 491.31 L1133.00 491.39 L1133.70 490.52 L1134.40 491.54 L1135.10 491.38 L1135.80 492.07 L1136.50 491.65 L1137.20 491.01 L1137.90 492.06 L1138.60 491.12 L1139.30 490.73 L1140.00 490.51 L1140.70 491.98 L1141.40 491.48 L1142.10 490.89 L1142.80 492.94 L1143.50 492.84 L1144.20 493.71 L1144.90 493.64 L1145.60 493.79 L1146.00 458.00 L1146.40 458.00 L1146.60 492.00 L1146.30 489.19 L1147.00 489.15 L1147.70 488.82 L1148.40 488.50 L1149.10 489.35 L1149.80 489.09 L1150.50 488.73 L1151.20 489.24 L1151.90 489.21 L1152.60 493.17 L1153.30 493.33 L1154.00 493.44 L1154.70 493.51 L1155.40 493.09 L1156.10 493.45 L1156.80 493.35 L1157.50 492.97 L1158.20 493.44 L1158.90 493.02 L1159.60 493.79 L1160.30 493.27 L1161.00 493.57 L1161.70 493.33 L1162.40 493.27 L1163.10 492.97 L1163.80 492.87 L1164.50 493.81 L1165.20 493.33 L1165.90 493.33 L1166.60 493.33 L1167.30 493.68 L1168.00 492.99 L1168.70 492.91 L1169.40 493.69 L1170.10 493.25 L1170.80 493.47 L1171.50 493.69 L1172.20 493.77 L1172.90 493.74 L1173.60 492.75 L1174.30 493.16 L1175.00 493.70 L1175.70 493.68 L1176.40 492.85 L1177.10 492.88 L1177.80 493.00 L1178.50 492.82 L1179.20 493.13 L1179.90 493.66 L1180.60 493.33 L1181.30 493.24 L1182.00 491.13 L1182.70 491.61 L1183.40 491.27 L1184.10 491.71 L1184.80 491.59 L1185.50 491.33 L1186.00 463.00 L1186.40 463.00 L1186.60 492.00 L1186.20 491.09 L1186.90 491.11 L1187.60 490.82 L1188.30 490.59 L1189.00 491.65 L1189.70 491.02 L1190.40 491.83 L1191.10 491.52 L1191.80 490.82 L1192.50 491.77 L1193.20 491.09 L1193.90 491.21 L1194.60 491.64 L1195.30 491.15 L1196.00 491.80 L1196.70 491.12 L1197.30 460.00 L1197.70 460.00 L1197.90 492.00 L1197.40 491.98 L1198.10 492.05 L1198.80 491.10 L1199.50 491.03 L1200.20 491.71 L1200.90 491.34 L1201.60 491.94 L1202.30 490.54 L1203.00 491.24 L1203.70 491.84 L1204.40 491.26 L1205.10 491.20 L1205.80 491.32 L1206.50 491.57 L1207.20 491.14 L1207.90 491.59 L1208.60 491.73 L1209.30 490.69 L1210.00 490.62 L1210.70 490.66 L1211.40 491.71 L1212.10 490.59 L1212.80 491.64 L1213.50 490.59 L1214.20 491.17 L1214.90 492.10 L1215.60 491.90 L1216.30 491.03 L1217.00 490.51 L1217.70 490.94 L1218.40 491.00 L1219.10 491.87 L1219.80 493.37 L1220.50 493.31 L1221.20 493.20 L1221.90 492.76 L1222.60 493.07 L1223.30 489.30 L1224.00 488.76 L1224.70 488.55 L1225.40 488.87 L1226.10 488.99 L1226.80 488.87 L1227.50 488.70 L1228.20 489.06 L1228.90 488.81 L1229.60 488.91 L1230.30 493.38 L1231.00 493.09 L1231.70 493.03 L1232.40 493.66 L1233.10 493.05 L1233.80 493.55 L1234.50 493.66 L1235.20 493.41 L1235.90 493.25 L1236.60 493.82 L1237.30 493.23 L1238.00 493.75 L1238.70 492.77 L1239.40 493.22 L1240.10 493.47 L1240.80 492.76 L1241.50 493.74 L1242.20 492.79 L1242.90 493.42 L1243.60 492.92 L1244.30 493.81 L1245.00 493.37 L1245.70 493.66 L1246.40 493.30 L1247.10 493.51 L1247.80 493.51 L1248.50 493.05 L1249.20 492.95 L1249.90 493.71 L1250.60 492.87 L1251.30 493.80 L1252.00 492.95 L1252.70 492.82 L1253.40 492.81 L1254.10 493.64 L1254.80 493.84 L1255.50 493.20 L1256.20 493.49 L1256.90 493.01 L1257.00 463.00 L1257.40 463.00 L1257.60 492.00 L1257.60 491.60 L1258.30 490.59 L1259.00 490.57 L1259.70 490.97 L1260.40 491.43 L1261.10 491.40 L1261.80 491.96 L1262.50 491.85 L1263.20 491.78 L1263.90 491.13 L1264.60 491.11 L1265.30 490.86 L1266.00 490.65 L1266.70 491.67 L1267.40 491.59 L1268.10 491.83 L1268.80 491.98 L1269.50 492.00 L1270.20 490.97 L1270.90 491.70 L1271.60 491.99 L1272.30 491.28 L1273.00 491.46 L1273.70 490.64 L1274.40 490.93 L1275.10 491.85 L1275.80 491.98 L1276.50 491.46 L1277.20 491.05 L1277.90 491.55 L1278.60 491.03 L1279.30 490.90 L1280.00 490.79 L1280.70 490.98 L1281.40 491.39 L1282.10 491.38 L1282.80 491.45 L1283.50 490.55 L1284.20 490.66 L1284.90 490.71 L1285.60 491.06 L1286.30 491.56 L1287.00 490.77 L1287.70 491.03 L1288.00 454.00 L1288.40 454.00 L1288.60 492.00 L1288.40 491.90 L1289.10 490.74 L1289.80 491.91 L1290.50 491.29 L1291.20 490.69 L1291.90 490.76 L1292.60 491.31 L1293.30 490.82 L1294.00 490.83 L1294.70 490.88 L1295.40 491.30 L1295.50 459.00 L1295.90 459.00 L1296.10 492.00 L1296.10 493.77 L1296.80 492.72 L1297.50 493.83 L1298.20 493.29 L1298.90 489.07 L1299.60 488.73 L1300.30 488.65 L1301.00 488.53 L1301.70 489.02 L1302.40 489.39 L1303.10 489.08 L1303.80 489.10 L1304.50 489.21 L1305.20 488.75 L1305.90 489.48 L1306.60 489.12 L1307.30 493.53 L1308.00 493.68 L1308.70 493.11 L1309.40 493.67 L1310.10 493.25 L1310.80 493.81 L1311.50 492.71 L1312.20 493.83 L1312.90 493.19 L1313.60 493.19 L1314.30 492.81 L1315.00 492.99 L1315.70 493.58 L1316.40 493.51 L1317.10 492.88 L1317.80 493.11 L1318.50 492.87 L1319.20 492.94 L1319.90 492.96 L1320.60 493.10 L1321.30 493.87 L1322.00 493.90 L1322.70 493.65 L1323.40 493.28 L1324.10 493.30 L1324.80 493.64 L1325.50 493.79 L1326.20 493.60 L1326.90 493.46 L1327.60 492.94 L1328.30 493.45 L1329.00 493.71 L1329.70 493.64 L1330.40 492.81 L1331.10 493.56 L1331.80 493.12 L1332.50 492.89 L1333.20 493.86 L1333.90 493.51 L1334.60 493.59 L1335.30 492.86 L1336.00 493.69 L1336.70 493.82 L1337.40 493.79 L1337.50 462.00 L1337.90 462.00 L1338.10 492.00 L1338.10 493.59 L1338.80 491.78 L1339.50 491.20 L1340.20 491.76 L1340.90 490.98 L1341.60 491.35 L1342.30 490.69 L1343.00 491.76 L1343.70 491.84 L1344.40 490.82 L1345.10 490.88 L1345.80 491.95 L1346.00 456.00 L1346.40 456.00 L1346.60 492.00 L1346.50 491.64 L1347.20 491.75 L1347.90 491.59 L1348.60 491.82 L1349.30 490.64 L1350.00 491.84 L1350.70 491.45 L1351.40 491.77 L1352.10 491.28 L1352.40 440.00 L1352.80 440.00 L1353.00 492.00 L1352.80 490.68 L1353.50 491.17 L1354.20 491.23 L1354.90 490.84 L1355.60 491.85 L1356.30 490.97 L1357.00 470.00 L1357.40 470.00 L1357.60 492.00 L1357.00 490.93 L1357.70 491.21 L1358.40 491.79 L1359.10 491.59 L1359.80 491.82 L1360.50 490.93 L1361.20 491.08 L1361.90 491.92 L1362.60 491.93 L1363.30 491.30 L1364.00 491.31 L1364.70 490.80 L1365.40 490.76 L1366.10 490.50 L1366.80 492.01 L1367.50 491.80 L1368.20 491.06 L1368.90 491.38 L1369.60 491.32 L1370.30 491.99 L1371.00 491.57 L1371.70 492.79 L1372.40 493.45 L1373.10 493.23 L1373.80 493.85 L1374.50 493.13 L1375.20 493.49 L1375.90 493.46 L1376.60 493.15 L1377.30 493.33 L1378.00 489.41 L1378.70 488.86 L1379.40 488.56 L1380.10 489.18 L1380.80 488.95 L1381.50 489.39 L1382.20 489.25 L1382.90 488.83 L1383.60 489.45 L1384.30 488.64 L1385.00 493.41 L1385.70 493.39 L1386.40 492.76 L1387.10 490.25 L1387.80 489.78 L1388.50 489.79 L1389.20 489.92 L1389.90 490.15 L1390.60 490.18 L1391.30 490.46 L1392.00 493.55 L1392.70 493.53 L1393.40 493.03 L1394.10 492.89 L1394.80 493.39 L1395.50 493.69 L1396.20 493.65 L1396.90 493.12 L1397.60 492.87 L1398.30 493.32 L1399.00 493.75 L1399.70 492.89 L1400.40 493.59 L1401.10 492.90 L1401.80 493.07 L1402.50 492.76 L1403.20 493.06 L1403.90 493.16 L1404.60 493.86 L1405.30 493.85 L1406.00 492.92 L1406.70 493.07 L1407.40 493.83 L1408.10 492.94 L1408.80 493.09 L1409.50 493.23 L1410.20 492.83 L1410.90 493.01 L1411.60 491.12 L1412.30 490.93 L1413.00 491.95 L1413.70 491.84 L1414.40 491.75 L1415.10 490.74 L1415.80 491.25 L1416.50 491.57 L1417.20 490.94 L1417.90 491.97 L1418.60 490.96 L1419.30 490.92 L1420.00 490.57 L1420.60 445.00 L1421.00 445.00 L1421.20 492.00 L1420.70 491.41 L1421.40 492.00 L1422.10 490.89 L1422.80 491.38 L1423.50 491.58 L1424.20 491.79 L1424.90 490.99 L1425.60 492.05 L1426.30 491.61 L1427.00 491.13 L1427.70 491.69 L1428.40 491.13 L1429.10 491.06 L1429.80 491.89 L1430.50 491.33 L1431.20 491.94 L1431.90 491.04 L1432.60 491.16 L1433.00 465.00 L1433.40 465.00 L1433.60 492.00 L1433.30 491.86 L1434.00 491.42 L1434.70 491.42 L1435.40 491.85 L1436.10 491.84 L1436.80 491.57 L1437.50 491.30 L1438.20 491.94 L1438.90 491.81 L1439.60 491.91 L1440.30 491.63 L1441.00 491.48 L1441.70 490.61 L1442.40 491.82 L1443.10 490.84 L1443.80 490.65 L1444.50 492.06 L1445.20 491.08 L1445.90 490.62 L1446.60 491.02 L1447.30 491.51 L1448.00 490.94" fill="none" stroke="#eab839" stroke-width="1.7" stroke-linejoin="round"/></svg>
<div class="t" style="left:-1066.50px;top:489.84px;width:1200px;font-size:12px;line-height:12px;color:#c7d0d9;font-weight:400;text-align:right;letter-spacing:0px;">0 W</div>
<div class="t" style="left:-1066.50px;top:451.72px;width:1200px;font-size:12px;line-height:12px;color:#c7d0d9;font-weight:400;text-align:right;letter-spacing:0px;">3 kW</div>
<div class="t" style="left:-1066.50px;top:413.59px;width:1200px;font-size:12px;line-height:12px;color:#c7d0d9;font-weight:400;text-align:right;letter-spacing:0px;">5 kW</div>
<div class="t" style="left:-1066.50px;top:375.47px;width:1200px;font-size:12px;line-height:12px;color:#c7d0d9;font-weight:400;text-align:right;letter-spacing:0px;">8 kW</div>
<div class="t" style="left:-1066.50px;top:337.34px;width:1200px;font-size:12px;line-height:12px;color:#c7d0d9;font-weight:400;text-align:right;letter-spacing:0px;">10 kW</div>
<div class="t" style="left:1460.00px;top:489.84px;width:1200px;font-size:12px;line-height:12px;color:#c7d0d9;font-weight:400;text-align:left;letter-spacing:0px;">0%</div>
<div class="t" style="left:1460.00px;top:451.72px;width:1200px;font-size:12px;line-height:12px;color:#c7d0d9;font-weight:400;text-align:left;letter-spacing:0px;">25%</div>
<div class="t" style="left:1460.00px;top:413.59px;width:1200px;font-size:12px;line-height:12px;color:#c7d0d9;font-weight:400;text-align:left;letter-spacing:0px;">50%</div>
<div class="t" style="left:1460.00px;top:375.47px;width:1200px;font-size:12px;line-height:12px;color:#c7d0d9;font-weight:400;text-align:left;letter-spacing:0px;">75%</div>
<div class="t" style="left:1460.00px;top:337.34px;width:1200px;font-size:12px;line-height:12px;color:#c7d0d9;font-weight:400;text-align:left;letter-spacing:0px;">100%</div>
<div class="t" style="left:-444.70px;top:504.54px;width:1200px;font-size:12px;line-height:12px;color:#c7d0d9;font-weight:400;text-align:center;letter-spacing:0px;">08/07</div>
<div class="t" style="left:-367.70px;top:504.54px;width:1200px;font-size:12px;line-height:12px;color:#c7d0d9;font-weight:400;text-align:center;letter-spacing:0px;">08/08</div>
<div class="t" style="left:-290.70px;top:504.54px;width:1200px;font-size:12px;line-height:12px;color:#c7d0d9;font-weight:400;text-align:center;letter-spacing:0px;">08/09</div>
<div class="t" style="left:-213.70px;top:504.54px;width:1200px;font-size:12px;line-height:12px;color:#c7d0d9;font-weight:400;text-align:center;letter-spacing:0px;">08/10</div>
<div class="t" style="left:-136.70px;top:504.54px;width:1200px;font-size:12px;line-height:12px;color:#c7d0d9;font-weight:400;text-align:center;letter-spacing:0px;">08/11</div>
<div class="t" style="left:-59.70px;top:504.54px;width:1200px;font-size:12px;line-height:12px;color:#c7d0d9;font-weight:400;text-align:center;letter-spacing:0px;">08/12</div>
<div class="t" style="left:17.30px;top:504.54px;width:1200px;font-size:12px;line-height:12px;color:#c7d0d9;font-weight:400;text-align:center;letter-spacing:0px;">08/13</div>
<div class="t" style="left:94.30px;top:504.54px;width:1200px;font-size:12px;line-height:12px;color:#c7d0d9;font-weight:400;text-align:center;letter-spacing:0px;">08/14</div>
<div class="t" style="left:171.30px;top:504.54px;width:1200px;font-size:12px;line-height:12px;color:#c7d0d9;font-weight:400;text-align:center;letter-spacing:0px;">08/15</div>
<div class="t" style="left:248.30px;top:504.54px;width:1200px;font-size:12px;line-height:12px;color:#c7d0d9;font-weight:400;text-align:center;letter-spacing:0px;">08/16</div>
<div class="t" style="left:325.30px;top:504.54px;width:1200px;font-size:12px;line-height:12px;color:#c7d0d9;font-weight:400;text-align:center;letter-spacing:0px;">08/17</div>
<div class="t" style="left:402.30px;top:504.54px;width:1200px;font-size:12px;line-height:12px;color:#c7d0d9;font-weight:400;text-align:center;letter-spacing:0px;">08/18</div>
<div class="t" style="left:479.30px;top:504.54px;width:1200px;font-size:12px;line-height:12px;color:#c7d0d9;font-weight:400;text-align:center;letter-spacing:0px;">08/19</div>
<div class="t" style="left:556.30px;top:504.54px;width:1200px;font-size:12px;line-height:12px;color:#c7d0d9;font-weight:400;text-align:center;letter-spacing:0px;">08/20</div>
<div class="t" style="left:633.30px;top:504.54px;width:1200px;font-size:12px;line-height:12px;color:#c7d0d9;font-weight:400;text-align:center;letter-spacing:0px;">08/21</div>
<div class="t" style="left:710.30px;top:504.54px;width:1200px;font-size:12px;line-height:12px;color:#c7d0d9;font-weight:400;text-align:center;letter-spacing:0px;">08/22</div>
<div class="t" style="left:787.30px;top:504.54px;width:1200px;font-size:12px;line-height:12px;color:#c7d0d9;font-weight:400;text-align:center;letter-spacing:0px;">08/23</div>
<div class="t" style="left:58px;top:420px;width:60px;height:14px;font-size:12px;line-height:14px;color:#c7d0d9;text-align:center;transform:rotate(-90deg)">Leistung</div>
<div class="t" style="left:1465.5px;top:420.5px;width:70px;height:14px;font-size:12px;line-height:14px;color:#c7d0d9;text-align:center;transform:rotate(90deg)">Kapazität</div>
<div class="r" style="left:93.00px;top:536.00px;width:10.00px;height:2.00px;background:#7eb26d;"></div>
<div class="t" style="left:110.20px;top:529.84px;width:1200px;font-size:12px;line-height:12px;color:#c7d0d9;font-weight:400;text-align:left;letter-spacing:0px;">erzeugte Leistung</div>
<div class="r" style="left:217.00px;top:536.00px;width:10.00px;height:2.00px;background:#eab839;"></div>
<div class="t" style="left:234.70px;top:529.84px;width:1200px;font-size:12px;line-height:12px;color:#c7d0d9;font-weight:400;text-align:left;letter-spacing:0px;">Verbrauch</div>
<div class="r" style="left:1468.00px;top:536.00px;width:10.00px;height:2.00px;background:#5195ce;"></div>
<div class="t" style="left:1485.00px;top:529.84px;width:1200px;font-size:12px;line-height:12px;color:#c7d0d9;font-weight:400;text-align:left;letter-spacing:-0.8px;">SOC</div>
<div class="t" style="left:1112.00px;top:316.41px;width:1200px;font-size:30px;line-height:30px;color:#c7d0d9;font-weight:400;text-align:center;letter-spacing:0.2px;-webkit-text-stroke:0.7px #c7d0d9;">23.08.2020</div>
<div class="r" style="left:1525.00px;top:373.00px;width:374.00px;height:105.00px;background:#e24d42;border-radius:1px;"></div>
<div class="t" style="left:1103.00px;top:381.15px;width:1200px;font-size:14px;line-height:14px;color:#e6c9c6;font-weight:700;text-align:center;letter-spacing:-0.65px;">Strom Richtung</div>
<div class="t" style="left:1112.00px;top:425.60px;width:1200px;font-size:28px;line-height:28px;color:#c9ced6;font-weight:700;text-align:center;letter-spacing:0.2px;">Netz Bezug</div>
<div class="t" style="left:1103.50px;top:495.15px;width:1200px;font-size:14px;line-height:14px;color:#d8d9da;font-weight:700;text-align:center;letter-spacing:-0.55px;">Steuerung</div>
<div class="r" style="left:1535px;top:526px;width:337px;height:20px;overflow:hidden;"><div style="position:absolute;left:0;top:0;width:337px;height:26px;background:#e03333;box-sizing:border-box;border:2px solid #ececec;border-right-color:#a8a8a8;border-bottom-color:#a8a8a8;"></div></div>
<div class="t" style="left:1104.00px;top:531.15px;width:1200px;font-size:14px;line-height:14px;color:#1b1b1b;font-weight:400;text-align:center;letter-spacing:-0.1px;">Raspberry ausschalten</div>
<div class="r" style="left:71.00px;top:563.00px;width:681.00px;height:144.00px;background:#141619;border:1px solid #202226;box-sizing:border-box;border-radius:3px;"></div>
<div class="t" style="left:-198.00px;top:571.15px;width:1200px;font-size:14px;line-height:14px;color:#d8d9da;font-weight:700;text-align:center;letter-spacing:-0.45px;">Leistungsdaten</div>
<div class="r" style="left:72.00px;top:594.00px;width:679.00px;height:21.00px;background:#202226;"></div>
<div class="r" style="left:72.00px;top:615.00px;width:679.00px;height:5.00px;background:#111215;"></div>
<div class="t" style="left:87.20px;top:600.44px;width:1200px;font-size:12px;line-height:12px;color:#33a2e5;font-weight:700;text-align:left;letter-spacing:-0.25px;">Bezeichnung</div>
<div class="t" style="left:552.30px;top:600.44px;width:1200px;font-size:12px;line-height:12px;color:#33a2e5;font-weight:700;text-align:left;letter-spacing:0px;">Summe</div>
<svg style="position:absolute;left:602px;top:602px" width="10" height="7" viewBox="0 0 10 7" fill="none" stroke="#33a2e5" stroke-width="1.6"><path d="M1.5 5.5 L5 2 L8.5 5.5"/></svg>
<div class="r" style="left:72px;top:620px;width:679px;height:82.7px;overflow:hidden;">
<div class="r" style="left:0;top:0px;width:465px;height:30px;background:#508642"></div>
<div class="r" style="left:467px;top:0px;width:195px;height:30px;background:#508642"></div>
<div class="t" style="left:15.2px;top:8.20px;font-size:13px;line-height:13px;color:#fff;letter-spacing:-0.35px">Gesamte Energie von Heute</div>
<div class="t" style="left:481.8px;top:8.20px;font-size:13px;line-height:13px;color:#fff;letter-spacing:-0.3px">28 kWh</div>
<div class="r" style="left:0;top:32px;width:465px;height:30px;background:#508642"></div>
<div class="r" style="left:467px;top:32px;width:195px;height:30px;background:#508642"></div>
<div class="t" style="left:15.2px;top:40.20px;font-size:13px;line-height:13px;color:#fff;letter-spacing:-0.35px">Energie diesen Monat</div>
<div class="t" style="left:481.8px;top:40.20px;font-size:13px;line-height:13px;color:#fff;letter-spacing:-0.3px">565 kWh</div>
<div class="r" style="left:0;top:64px;width:465px;height:30px;background:#508642"></div>
<div class="r" style="left:467px;top:64px;width:195px;height:30px;background:#508642"></div>
<div class="t" style="left:15.2px;top:72.20px;font-size:13px;line-height:13px;color:#fff;letter-spacing:-0.35px">Energie dieses Jahr</div>
<div class="t" style="left:481.8px;top:72.20px;font-size:13px;line-height:13px;color:#fff;letter-spacing:-0.3px">565 kWh</div>
</div>
<div class="r" style="left:735.00px;top:637.00px;width:15.00px;height:40.50px;background:#7a7a7a;"></div>
<svg style="position:absolute;left:737px;top:624px" width="11" height="9" viewBox="0 0 11 9" fill="none" stroke="#707070" stroke-width="2"><path d="M1.8 7 L5.5 3.2 L9.2 7"/></svg>
<svg style="position:absolute;left:737px;top:689px" width="11" height="9" viewBox="0 0 11 9" fill="none" stroke="#707070" stroke-width="2"><path d="M1.8 2 L5.5 5.8 L9.2 2"/></svg>
<div class="r" style="left:760.00px;top:563.00px;width:1139.00px;height:144.00px;background:#141619;border:1px solid #202226;box-sizing:border-box;border-radius:3px;"></div>
<div class="t" style="left:721.00px;top:570.75px;width:1200px;font-size:14px;line-height:14px;color:#d8d9da;font-weight:700;text-align:center;letter-spacing:-0.45px;">Tagesleistung</div>
<svg style="position:absolute;left:1804px;top:571.5px" width="13" height="13" viewBox="0 0 13 13" fill="none" stroke="#33a2e5" stroke-width="1.3"><circle cx="6.5" cy="6.5" r="5.6"/><path d="M6.5 3 V6.5 H4.2"/></svg>
<div class="t" style="left:1821.30px;top:571.84px;width:1200px;font-size:12px;line-height:12px;color:#33a2e5;font-weight:700;text-align:left;letter-spacing:-0.4px;">Last 4 weeks</div>
<svg style="position:absolute;left:0;top:0" width="1913" height="720" viewBox="0 0 1913 720"><line x1="834.2" y1="669.5" x2="1874.7" y2="669.5" stroke="rgba(255,255,255,0.17)" stroke-width="1"/><line x1="834.2" y1="649.5" x2="1874.7" y2="649.5" stroke="rgba(255,255,255,0.17)" stroke-width="1"/><line x1="834.2" y1="629.5" x2="1874.7" y2="629.5" stroke="rgba(255,255,255,0.17)" stroke-width="1"/><line x1="834.2" y1="609.5" x2="1874.7" y2="609.5" stroke="rgba(255,255,255,0.17)" stroke-width="1"/><line x1="879.5" y1="609.5" x2="879.5" y2="669.5" stroke="rgba(255,255,255,0.17)" stroke-width="1"/><line x1="953.5" y1="609.5" x2="953.5" y2="669.5" stroke="rgba(255,255,255,0.17)" stroke-width="1"/><line x1="1027.5" y1="609.5" x2="1027.5" y2="669.5" stroke="rgba(255,255,255,0.17)" stroke-width="1"/><line x1="1102.5" y1="609.5" x2="1102.5" y2="669.5" stroke="rgba(255,255,255,0.17)" stroke-width="1"/><line x1="1176.5" y1="609.5" x2="1176.5" y2="669.5" stroke="rgba(255,255,255,0.17)" stroke-width="1"/><line x1="1250.5" y1="609.5" x2="1250.5" y2="669.5" stroke="rgba(255,255,255,0.17)" stroke-width="1"/><line x1="1325.5" y1="609.5" x2="1325.5" y2="669.5" stroke="rgba(255,255,255,0.17)" stroke-width="1"/><line x1="1399.5" y1="609.5" x2="1399.5" y2="669.5" stroke="rgba(255,255,255,0.17)" stroke-width="1"/><line x1="1473.5" y1="609.5" x2="1473.5" y2="669.5" stroke="rgba(255,255,255,0.17)" stroke-width="1"/><line x1="1548.5" y1="609.5" x2="1548.5" y2="669.5" stroke="rgba(255,255,255,0.17)" stroke-width="1"/><line x1="1622.5" y1="609.5" x2="1622.5" y2="669.5" stroke="rgba(255,255,255,0.17)" stroke-width="1"/><line x1="1696.5" y1="609.5" x2="1696.5" y2="669.5" stroke="rgba(255,255,255,0.17)" stroke-width="1"/><line x1="1771.5" y1="609.5" x2="1771.5" y2="669.5" stroke="rgba(255,255,255,0.17)" stroke-width="1"/><line x1="1845.5" y1="609.5" x2="1845.5" y2="669.5" stroke="rgba(255,255,255,0.17)" stroke-width="1"/><rect x="1241.50" y="628.9" width="25" height="39.90" fill="#7eb26d"/><rect x="1278.66" y="624.2" width="25" height="44.60" fill="#7eb26d"/><rect x="1315.82" y="634.3" width="25" height="34.50" fill="#7eb26d"/><rect x="1352.98" y="629.6" width="25" height="39.20" fill="#7eb26d"/><rect x="1390.14" y="642.9" width="25" height="25.90" fill="#7eb26d"/><rect x="1427.30" y="628.9" width="25" height="39.90" fill="#7eb26d"/><rect x="1464.46" y="641.4" width="25" height="27.40" fill="#7eb26d"/><rect x="1501.62" y="636.9" width="25" height="31.90" fill="#7eb26d"/><rect x="1538.78" y="645.4" width="25" height="23.40" fill="#7eb26d"/><rect x="1575.94" y="632.1" width="25" height="36.70" fill="#7eb26d"/><rect x="1613.10" y="636.0" width="25" height="32.80" fill="#7eb26d"/><rect x="1650.26" y="637.9" width="25" height="30.90" fill="#7eb26d"/><rect x="1687.42" y="633.8" width="25" height="35.00" fill="#7eb26d"/><rect x="1724.58" y="628.0" width="25" height="40.80" fill="#7eb26d"/><rect x="1761.74" y="653.8" width="25" height="15.00" fill="#7eb26d"/><rect x="1798.90" y="628.9" width="25" height="39.90" fill="#7eb26d"/><rect x="1836.06" y="640.9" width="25" height="27.90" fill="#7eb26d"/></svg>
<div class="t" style="left:-371.00px;top:663.14px;width:1200px;font-size:12px;line-height:12px;color:#c7d0d9;font-weight:400;text-align:right;letter-spacing:-0.2px;">0 Wh</div>
<div class="t" style="left:-371.00px;top:643.14px;width:1200px;font-size:12px;line-height:12px;color:#c7d0d9;font-weight:400;text-align:right;letter-spacing:-0.2px;">20 kWh</div>
<div class="t" style="left:-371.00px;top:623.14px;width:1200px;font-size:12px;line-height:12px;color:#c7d0d9;font-weight:400;text-align:right;letter-spacing:-0.2px;">40 kWh</div>
<div class="t" style="left:-371.00px;top:603.14px;width:1200px;font-size:12px;line-height:12px;color:#c7d0d9;font-weight:400;text-align:right;letter-spacing:-0.2px;">60 kWh</div>
<div class="t" style="left:279.50px;top:677.84px;width:1200px;font-size:12px;line-height:12px;color:#c7d0d9;font-weight:400;text-align:center;letter-spacing:0px;">07/28</div>
<div class="t" style="left:353.50px;top:677.84px;width:1200px;font-size:12px;line-height:12px;color:#c7d0d9;font-weight:400;text-align:center;letter-spacing:0px;">07/30</div>
<div class="t" style="left:427.50px;top:677.84px;width:1200px;font-size:12px;line-height:12px;color:#c7d0d9;font-weight:400;text-align:center;letter-spacing:0px;">08/01</div>
<div class="t" style="left:502.50px;top:677.84px;width:1200px;font-size:12px;line-height:12px;color:#c7d0d9;font-weight:400;text-align:center;letter-spacing:0px;">08/03</div>
<div class="t" style="left:576.50px;top:677.84px;width:1200px;font-size:12px;line-height:12px;color:#c7d0d9;font-weight:400;text-align:center;letter-spacing:0px;">08/05</div>
<div class="t" style="left:650.50px;top:677.84px;width:1200px;font-size:12px;line-height:12px;color:#c7d0d9;font-weight:400;text-align:center;letter-spacing:0px;">08/07</div>
<div class="t" style="left:725.50px;top:677.84px;width:1200px;font-size:12px;line-height:12px;color:#c7d0d9;font-weight:400;text-align:center;letter-spacing:0px;">08/09</div>
<div class="t" style="left:799.50px;top:677.84px;width:1200px;font-size:12px;line-height:12px;color:#c7d0d9;font-weight:400;text-align:center;letter-spacing:0px;">08/11</div>
<div class="t" style="left:873.50px;top:677.84px;width:1200px;font-size:12px;line-height:12px;color:#c7d0d9;font-weight:400;text-align:center;letter-spacing:0px;">08/13</div>
<div class="t" style="left:948.50px;top:677.84px;width:1200px;font-size:12px;line-height:12px;color:#c7d0d9;font-weight:400;text-align:center;letter-spacing:0px;">08/15</div>
<div class="t" style="left:1022.50px;top:677.84px;width:1200px;font-size:12px;line-height:12px;color:#c7d0d9;font-weight:400;text-align:center;letter-spacing:0px;">08/17</div>
<div class="t" style="left:1096.50px;top:677.84px;width:1200px;font-size:12px;line-height:12px;color:#c7d0d9;font-weight:400;text-align:center;letter-spacing:0px;">08/19</div>
<div class="t" style="left:1171.50px;top:677.84px;width:1200px;font-size:12px;line-height:12px;color:#c7d0d9;font-weight:400;text-align:center;letter-spacing:0px;">08/21</div>
<div class="t" style="left:1245.50px;top:677.84px;width:1200px;font-size:12px;line-height:12px;color:#c7d0d9;font-weight:400;text-align:center;letter-spacing:0px;">08/23</div>
<div class="t" style="left:748px;top:638.5px;width:60px;height:14px;font-size:12px;line-height:14px;color:#c7d0d9;text-align:center;transform:rotate(-90deg)">pro Tag</div>
</body></html>
